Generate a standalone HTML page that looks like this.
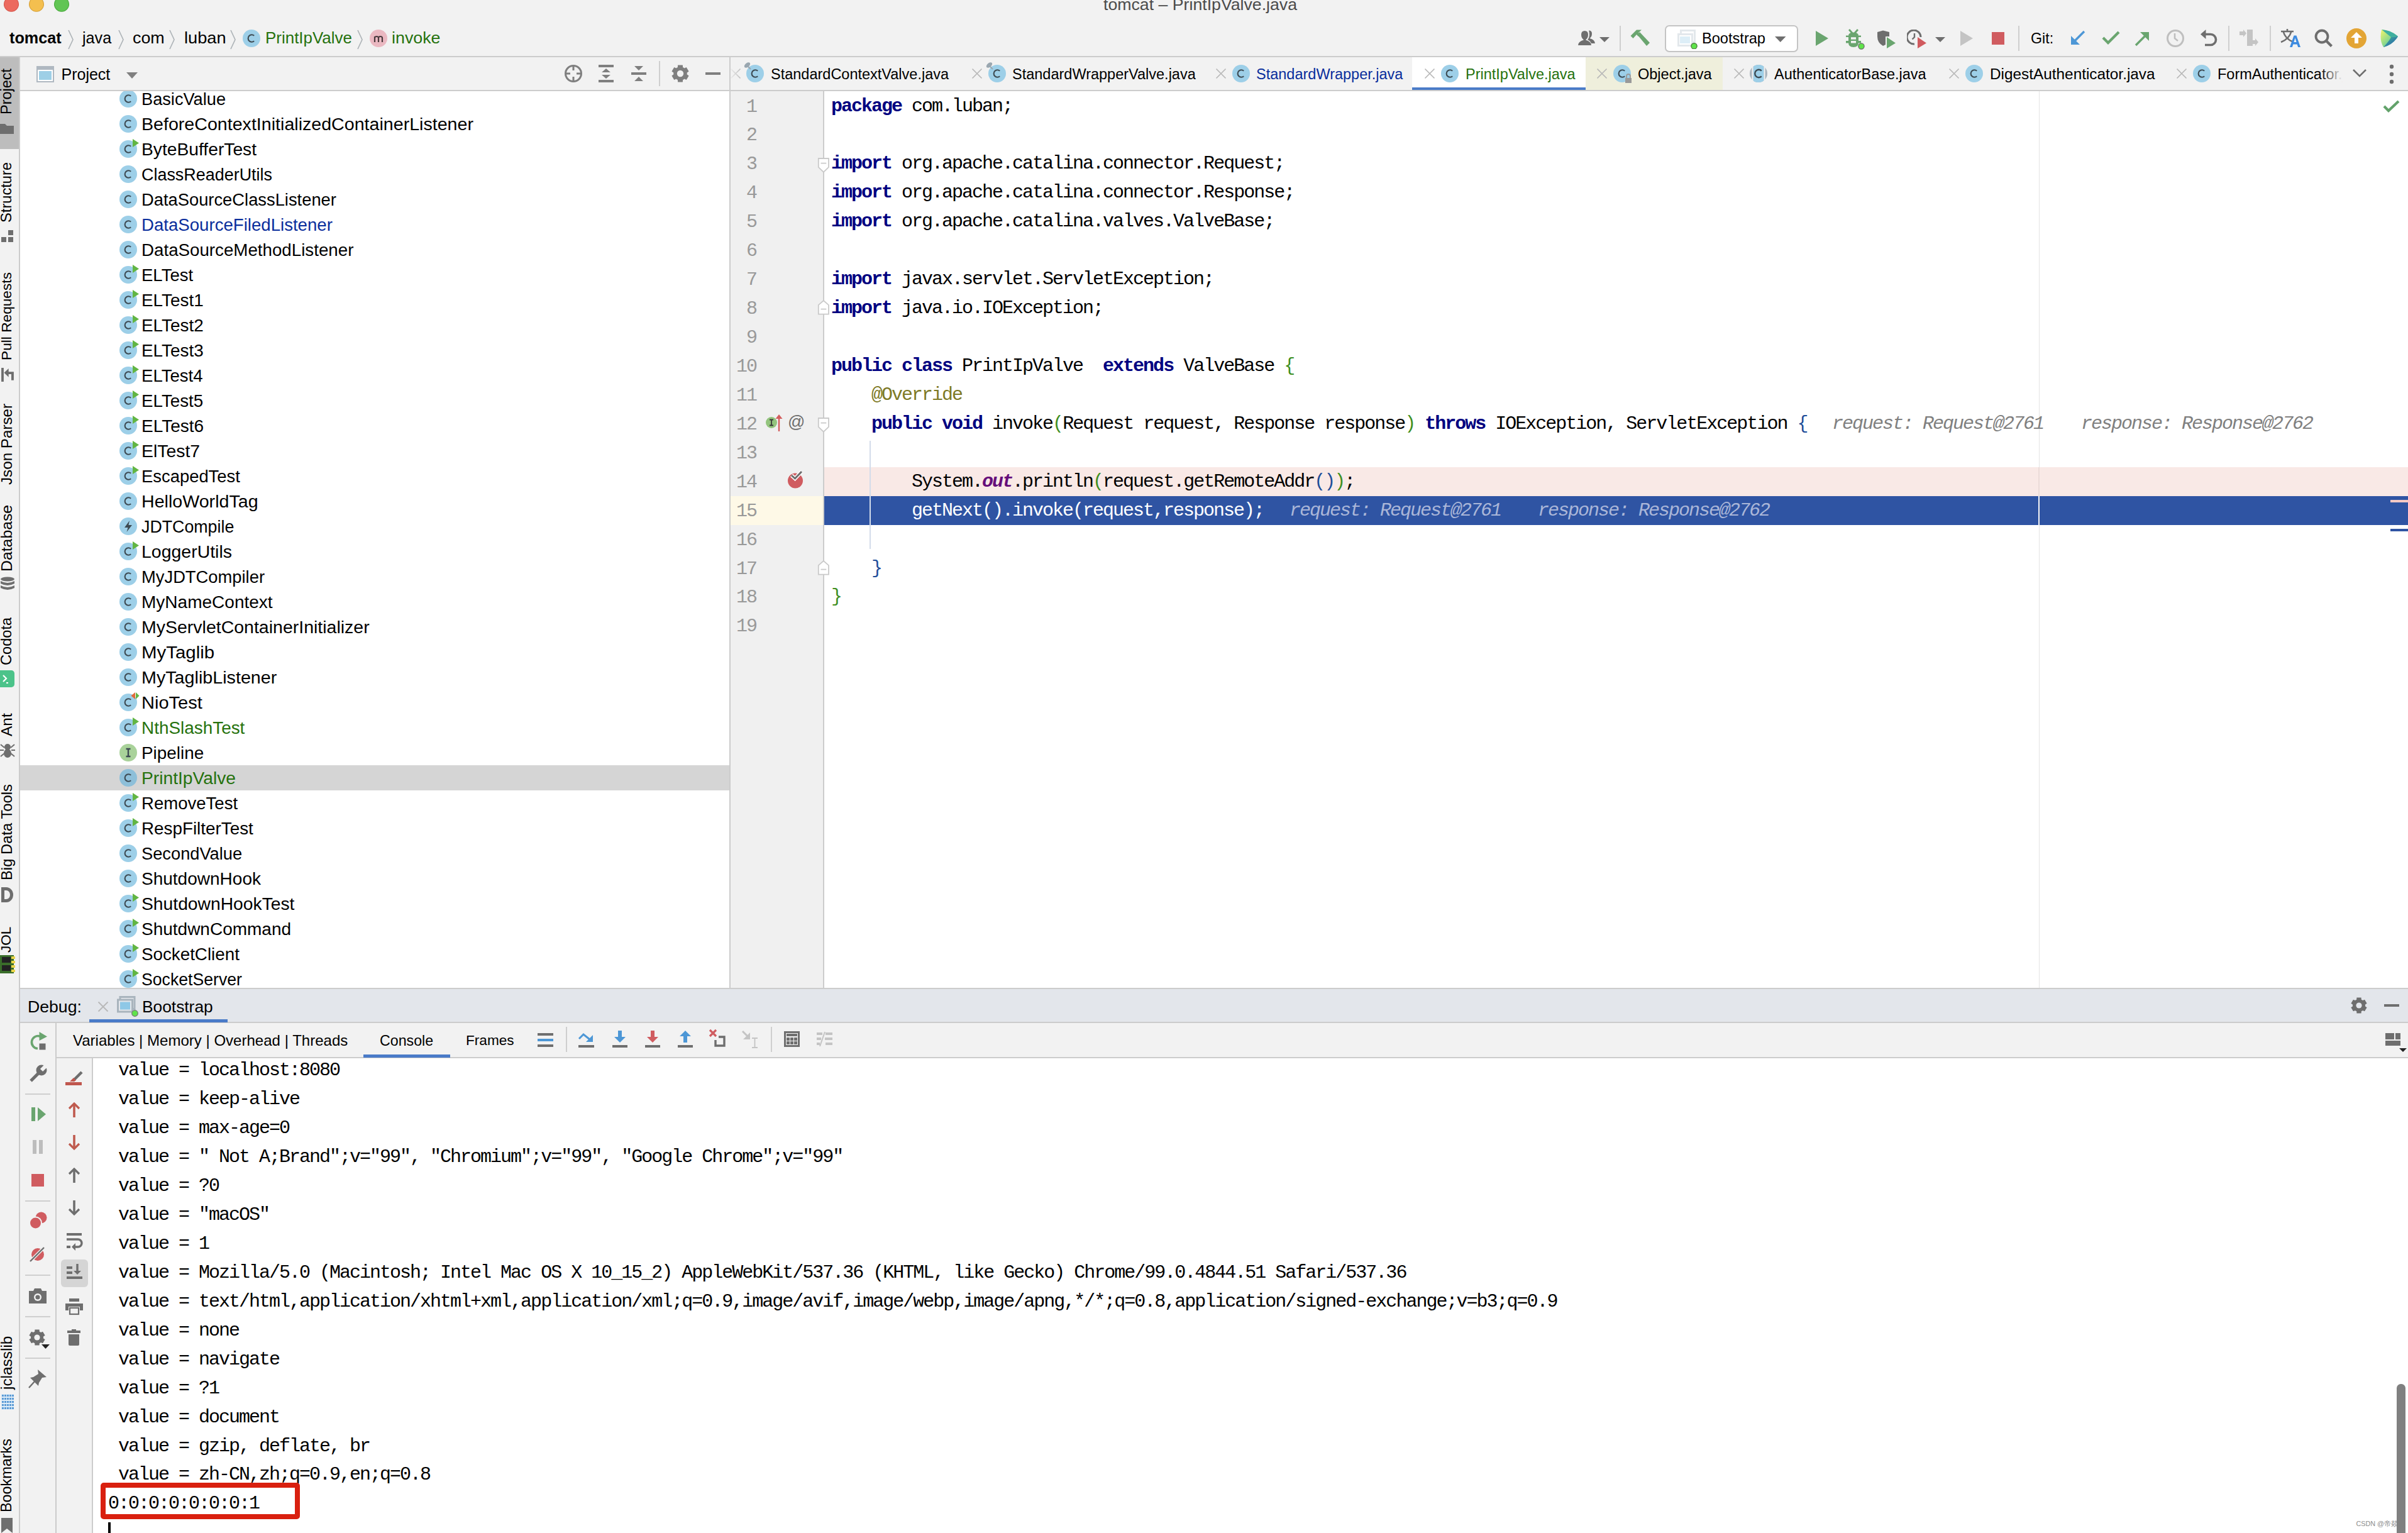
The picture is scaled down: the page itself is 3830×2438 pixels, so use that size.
<!DOCTYPE html><html><head><meta charset="utf-8"><style>
html,body{margin:0;padding:0;}
body{width:3830px;height:2438px;overflow:hidden;position:relative;background:#F2F2F2;}
</style></head><body>
<div style="position:absolute;left:0px;top:0px;width:3830px;height:89px;background:#F2F2F2;"></div>
<svg style="position:absolute;left:0px;top:0px;" width="120" height="24" viewBox="0 0 120 24"><circle cx="18" cy="6.8" r="11.5" fill="#EC6A5F" stroke="#D5574C" stroke-width="1.1"/><circle cx="58" cy="6.8" r="11.5" fill="#F4BF4F" stroke="#D6A13A" stroke-width="1.1"/><circle cx="98" cy="6.8" r="11.5" fill="#61C554" stroke="#48A83C" stroke-width="1.1"/></svg>
<div style="position:absolute;left:1755px;top:-5.60px;font-family:'Liberation Sans',sans-serif;font-size:26.7px;line-height:1;white-space:pre;color:#4B4B4B;">tomcat – PrintIpValve.java</div>
<div style="position:absolute;left:15px;top:47.67px;font-family:'Liberation Sans',sans-serif;font-size:25.2px;line-height:1;white-space:pre;color:#000;font-weight:bold;">tomcat</div>
<svg style="position:absolute;left:106px;top:45.5px;" width="14" height="34" viewBox="0 0 14 34"><path d="M3 2 L10 17 L3 32" fill="none" stroke="#AEB4B8" stroke-width="1.7"/></svg>
<div style="position:absolute;left:131px;top:47.67px;font-family:'Liberation Sans',sans-serif;font-size:25.2px;line-height:1;white-space:pre;color:#000;">java</div>
<svg style="position:absolute;left:186px;top:45.5px;" width="14" height="34" viewBox="0 0 14 34"><path d="M3 2 L10 17 L3 32" fill="none" stroke="#AEB4B8" stroke-width="1.7"/></svg>
<div style="position:absolute;left:210.5px;top:47.67px;font-family:'Liberation Sans',sans-serif;font-size:25.2px;line-height:1;white-space:pre;color:#000;transform-origin:0 0;transform:scaleX(1.065);">com</div>
<svg style="position:absolute;left:267px;top:45.5px;" width="14" height="34" viewBox="0 0 14 34"><path d="M3 2 L10 17 L3 32" fill="none" stroke="#AEB4B8" stroke-width="1.7"/></svg>
<div style="position:absolute;left:292.5px;top:47.67px;font-family:'Liberation Sans',sans-serif;font-size:25.2px;line-height:1;white-space:pre;color:#000;transform-origin:0 0;transform:scaleX(1.08);">luban</div>
<svg style="position:absolute;left:364px;top:45.5px;" width="14" height="34" viewBox="0 0 14 34"><path d="M3 2 L10 17 L3 32" fill="none" stroke="#AEB4B8" stroke-width="1.7"/></svg>
<svg style="position:absolute;left:380px;top:41px;" width="40" height="40" viewBox="0 0 40 40"><circle cx="20" cy="20" r="14" fill="#9DCFE8"/><path d="M24.2 15.8 A5.7 5.7 0 1 0 24.2 24.2" fill="none" stroke="#3D4A52" stroke-width="2.1"/></svg>
<div style="position:absolute;left:421.5px;top:47.67px;font-family:'Liberation Sans',sans-serif;font-size:25.2px;line-height:1;white-space:pre;color:#26720E;transform-origin:0 0;transform:scaleX(1.03);">PrintIpValve</div>
<svg style="position:absolute;left:566px;top:45.5px;" width="14" height="34" viewBox="0 0 14 34"><path d="M3 2 L10 17 L3 32" fill="none" stroke="#AEB4B8" stroke-width="1.7"/></svg>
<svg style="position:absolute;left:582px;top:41px;" width="40" height="40" viewBox="0 0 40 40"><circle cx="20" cy="20" r="14" fill="#EAB8C1"/><path d="M14 26v-9M14 19.5q0-2.5 3-2.5t3 2.5v6.5M20 19.5q0-2.5 3-2.5t3 2.5v6.5" fill="none" stroke="#4A3A3E" stroke-width="2.2"/></svg>
<div style="position:absolute;left:623px;top:47.67px;font-family:'Liberation Sans',sans-serif;font-size:25.2px;line-height:1;white-space:pre;color:#26720E;transform-origin:0 0;transform:scaleX(1.065);">invoke</div>
<div style="position:absolute;left:0px;top:89px;width:3830px;height:2px;background:#CCCCCC;"></div>
<div style="position:absolute;left:0px;top:91px;width:30px;height:2347px;background:#F2F2F2;"></div>
<div style="position:absolute;left:30px;top:91px;width:2px;height:2347px;background:#CCCCCC;"></div>
<div style="position:absolute;left:0px;top:91px;width:30px;height:146px;background:#BDBDBD;"></div>
<div style="position:absolute;left:32px;top:91px;width:1128px;height:52px;background:#F2F2F2;"></div>
<div style="position:absolute;left:32px;top:143px;width:1128px;height:2px;background:#CCCCCC;"></div>
<div style="position:absolute;left:32px;top:145px;width:1128px;height:1426px;background:#FFFFFF;"></div>
<div style="position:absolute;left:1160px;top:91px;width:2px;height:1481px;background:#CCCCCC;"></div>
<div style="position:absolute;left:1162px;top:91px;width:2668px;height:52px;background:#F2F2F2;"></div>
<div style="position:absolute;left:1162px;top:143px;width:2668px;height:2px;background:#CCCCCC;"></div>
<div style="position:absolute;left:1162px;top:145px;width:2668px;height:1426px;background:#FFFFFF;"></div>
<div style="position:absolute;left:1162px;top:145px;width:148px;height:1426px;background:#F0F0F0;"></div>
<div style="position:absolute;left:1309px;top:145px;width:2px;height:1426px;background:#CCCCCC;"></div>
<div style="position:absolute;left:32px;top:1571px;width:3798px;height:2px;background:#CCCCCC;"></div>
<div style="position:absolute;left:32px;top:1573px;width:3798px;height:52px;background:#E3E6EB;"></div>
<div style="position:absolute;left:32px;top:1625px;width:3798px;height:2px;background:#CCCCCC;"></div>
<div style="position:absolute;left:32px;top:1627px;width:3798px;height:54px;background:#F2F2F2;"></div>
<div style="position:absolute;left:90px;top:1681px;width:3740px;height:2px;background:#CCCCCC;"></div>
<div style="position:absolute;left:148px;top:1683px;width:3682px;height:755px;background:#FFFFFF;"></div>
<div style="position:absolute;left:88px;top:1627px;width:2px;height:811px;background:#CCCCCC;"></div>
<div style="position:absolute;left:146px;top:1683px;width:2px;height:755px;background:#CCCCCC;"></div>
<div style="position:absolute;left:32px;top:145px;width:1128px;height:1426px;overflow:hidden;">
<svg style="position:absolute;left:152px;top:-8px;" width="40" height="40" viewBox="0 0 40 40"><circle cx="20" cy="20" r="14" fill="#9DCFE8"/><path d="M24.2 15.8 A5.7 5.7 0 1 0 24.2 24.2" fill="none" stroke="#3D4A52" stroke-width="2.1"/></svg>
<div style="position:absolute;left:193.2px;top:0.31px;font-family:'Liberation Sans',sans-serif;font-size:26.8px;line-height:1;white-space:pre;color:#000;transform-origin:0 0;transform:scaleX(1.0146);">BasicValue</div>
<svg style="position:absolute;left:152px;top:32px;" width="40" height="40" viewBox="0 0 40 40"><circle cx="20" cy="20" r="14" fill="#9DCFE8"/><path d="M24.2 15.8 A5.7 5.7 0 1 0 24.2 24.2" fill="none" stroke="#3D4A52" stroke-width="2.1"/></svg>
<div style="position:absolute;left:193.2px;top:40.31px;font-family:'Liberation Sans',sans-serif;font-size:26.8px;line-height:1;white-space:pre;color:#000;transform-origin:0 0;transform:scaleX(1.0675);">BeforeContextInitializedContainerListener</div>
<svg style="position:absolute;left:152px;top:72px;" width="40" height="40" viewBox="0 0 40 40"><circle cx="20" cy="20" r="14" fill="#9DCFE8"/><path d="M24.2 15.8 A5.7 5.7 0 1 0 24.2 24.2" fill="none" stroke="#3D4A52" stroke-width="2.1"/><path d="M27 4 L37 10.5 L27 17 Z" fill="#62B543"/></svg>
<div style="position:absolute;left:193.2px;top:80.31px;font-family:'Liberation Sans',sans-serif;font-size:26.8px;line-height:1;white-space:pre;color:#000;transform-origin:0 0;transform:scaleX(1.0535);">ByteBufferTest</div>
<svg style="position:absolute;left:152px;top:112px;" width="40" height="40" viewBox="0 0 40 40"><circle cx="20" cy="20" r="14" fill="#9DCFE8"/><path d="M24.2 15.8 A5.7 5.7 0 1 0 24.2 24.2" fill="none" stroke="#3D4A52" stroke-width="2.1"/></svg>
<div style="position:absolute;left:193.2px;top:120.31px;font-family:'Liberation Sans',sans-serif;font-size:26.8px;line-height:1;white-space:pre;color:#000;transform-origin:0 0;transform:scaleX(1.0049);">ClassReaderUtils</div>
<svg style="position:absolute;left:152px;top:152px;" width="40" height="40" viewBox="0 0 40 40"><circle cx="20" cy="20" r="14" fill="#9DCFE8"/><path d="M24.2 15.8 A5.7 5.7 0 1 0 24.2 24.2" fill="none" stroke="#3D4A52" stroke-width="2.1"/></svg>
<div style="position:absolute;left:193.2px;top:160.31px;font-family:'Liberation Sans',sans-serif;font-size:26.8px;line-height:1;white-space:pre;color:#000;transform-origin:0 0;transform:scaleX(1.0199);">DataSourceClassListener</div>
<svg style="position:absolute;left:152px;top:192px;" width="40" height="40" viewBox="0 0 40 40"><circle cx="20" cy="20" r="14" fill="#9DCFE8"/><path d="M24.2 15.8 A5.7 5.7 0 1 0 24.2 24.2" fill="none" stroke="#3D4A52" stroke-width="2.1"/></svg>
<div style="position:absolute;left:193.2px;top:200.31px;font-family:'Liberation Sans',sans-serif;font-size:26.8px;line-height:1;white-space:pre;color:#0A2E9C;transform-origin:0 0;transform:scaleX(1.0304);">DataSourceFiledListener</div>
<svg style="position:absolute;left:152px;top:232px;" width="40" height="40" viewBox="0 0 40 40"><circle cx="20" cy="20" r="14" fill="#9DCFE8"/><path d="M24.2 15.8 A5.7 5.7 0 1 0 24.2 24.2" fill="none" stroke="#3D4A52" stroke-width="2.1"/></svg>
<div style="position:absolute;left:193.2px;top:240.31px;font-family:'Liberation Sans',sans-serif;font-size:26.8px;line-height:1;white-space:pre;color:#000;transform-origin:0 0;transform:scaleX(1.0342);">DataSourceMethodListener</div>
<svg style="position:absolute;left:152px;top:272px;" width="40" height="40" viewBox="0 0 40 40"><circle cx="20" cy="20" r="14" fill="#9DCFE8"/><path d="M24.2 15.8 A5.7 5.7 0 1 0 24.2 24.2" fill="none" stroke="#3D4A52" stroke-width="2.1"/><path d="M27 4 L37 10.5 L27 17 Z" fill="#62B543"/></svg>
<div style="position:absolute;left:193.2px;top:280.31px;font-family:'Liberation Sans',sans-serif;font-size:26.8px;line-height:1;white-space:pre;color:#000;transform-origin:0 0;transform:scaleX(1.0278);">ELTest</div>
<svg style="position:absolute;left:152px;top:312px;" width="40" height="40" viewBox="0 0 40 40"><circle cx="20" cy="20" r="14" fill="#9DCFE8"/><path d="M24.2 15.8 A5.7 5.7 0 1 0 24.2 24.2" fill="none" stroke="#3D4A52" stroke-width="2.1"/><path d="M27 4 L37 10.5 L27 17 Z" fill="#62B543"/></svg>
<div style="position:absolute;left:193.2px;top:320.31px;font-family:'Liberation Sans',sans-serif;font-size:26.8px;line-height:1;white-space:pre;color:#000;transform-origin:0 0;transform:scaleX(1.0402);">ELTest1</div>
<svg style="position:absolute;left:152px;top:352px;" width="40" height="40" viewBox="0 0 40 40"><circle cx="20" cy="20" r="14" fill="#9DCFE8"/><path d="M24.2 15.8 A5.7 5.7 0 1 0 24.2 24.2" fill="none" stroke="#3D4A52" stroke-width="2.1"/><path d="M27 4 L37 10.5 L27 17 Z" fill="#62B543"/></svg>
<div style="position:absolute;left:193.2px;top:360.31px;font-family:'Liberation Sans',sans-serif;font-size:26.8px;line-height:1;white-space:pre;color:#000;transform-origin:0 0;transform:scaleX(1.0402);">ELTest2</div>
<svg style="position:absolute;left:152px;top:392px;" width="40" height="40" viewBox="0 0 40 40"><circle cx="20" cy="20" r="14" fill="#9DCFE8"/><path d="M24.2 15.8 A5.7 5.7 0 1 0 24.2 24.2" fill="none" stroke="#3D4A52" stroke-width="2.1"/><path d="M27 4 L37 10.5 L27 17 Z" fill="#62B543"/></svg>
<div style="position:absolute;left:193.2px;top:400.31px;font-family:'Liberation Sans',sans-serif;font-size:26.8px;line-height:1;white-space:pre;color:#000;transform-origin:0 0;transform:scaleX(1.0402);">ELTest3</div>
<svg style="position:absolute;left:152px;top:432px;" width="40" height="40" viewBox="0 0 40 40"><circle cx="20" cy="20" r="14" fill="#9DCFE8"/><path d="M24.2 15.8 A5.7 5.7 0 1 0 24.2 24.2" fill="none" stroke="#3D4A52" stroke-width="2.1"/><path d="M27 4 L37 10.5 L27 17 Z" fill="#62B543"/></svg>
<div style="position:absolute;left:193.2px;top:440.31px;font-family:'Liberation Sans',sans-serif;font-size:26.8px;line-height:1;white-space:pre;color:#000;transform-origin:0 0;transform:scaleX(1.0290);">ELTest4</div>
<svg style="position:absolute;left:152px;top:472px;" width="40" height="40" viewBox="0 0 40 40"><circle cx="20" cy="20" r="14" fill="#9DCFE8"/><path d="M24.2 15.8 A5.7 5.7 0 1 0 24.2 24.2" fill="none" stroke="#3D4A52" stroke-width="2.1"/><path d="M27 4 L37 10.5 L27 17 Z" fill="#62B543"/></svg>
<div style="position:absolute;left:193.2px;top:480.31px;font-family:'Liberation Sans',sans-serif;font-size:26.8px;line-height:1;white-space:pre;color:#000;transform-origin:0 0;transform:scaleX(1.0359);">ELTest5</div>
<svg style="position:absolute;left:152px;top:512px;" width="40" height="40" viewBox="0 0 40 40"><circle cx="20" cy="20" r="14" fill="#9DCFE8"/><path d="M24.2 15.8 A5.7 5.7 0 1 0 24.2 24.2" fill="none" stroke="#3D4A52" stroke-width="2.1"/><path d="M27 4 L37 10.5 L27 17 Z" fill="#62B543"/></svg>
<div style="position:absolute;left:193.2px;top:520.31px;font-family:'Liberation Sans',sans-serif;font-size:26.8px;line-height:1;white-space:pre;color:#000;transform-origin:0 0;transform:scaleX(1.0457);">ELTest6</div>
<svg style="position:absolute;left:152px;top:552px;" width="40" height="40" viewBox="0 0 40 40"><circle cx="20" cy="20" r="14" fill="#9DCFE8"/><path d="M24.2 15.8 A5.7 5.7 0 1 0 24.2 24.2" fill="none" stroke="#3D4A52" stroke-width="2.1"/><path d="M27 4 L37 10.5 L27 17 Z" fill="#62B543"/></svg>
<div style="position:absolute;left:193.2px;top:560.31px;font-family:'Liberation Sans',sans-serif;font-size:26.8px;line-height:1;white-space:pre;color:#000;transform-origin:0 0;transform:scaleX(1.0600);">ElTest7</div>
<svg style="position:absolute;left:152px;top:592px;" width="40" height="40" viewBox="0 0 40 40"><circle cx="20" cy="20" r="14" fill="#9DCFE8"/><path d="M24.2 15.8 A5.7 5.7 0 1 0 24.2 24.2" fill="none" stroke="#3D4A52" stroke-width="2.1"/><path d="M27 4 L37 10.5 L27 17 Z" fill="#62B543"/></svg>
<div style="position:absolute;left:193.2px;top:600.31px;font-family:'Liberation Sans',sans-serif;font-size:26.8px;line-height:1;white-space:pre;color:#000;transform-origin:0 0;transform:scaleX(1.0224);">EscapedTest</div>
<svg style="position:absolute;left:152px;top:632px;" width="40" height="40" viewBox="0 0 40 40"><circle cx="20" cy="20" r="14" fill="#9DCFE8"/><path d="M24.2 15.8 A5.7 5.7 0 1 0 24.2 24.2" fill="none" stroke="#3D4A52" stroke-width="2.1"/></svg>
<div style="position:absolute;left:193.2px;top:640.31px;font-family:'Liberation Sans',sans-serif;font-size:26.8px;line-height:1;white-space:pre;color:#000;transform-origin:0 0;transform:scaleX(1.0678);">HelloWorldTag</div>
<svg style="position:absolute;left:152px;top:672px;" width="40" height="40" viewBox="0 0 40 40"><circle cx="20" cy="20" r="14" fill="#9DCFE8"/><path d="M22 11 L14 22 H19.5 L17.5 29 L26 18 H20.5 Z" fill="#3D4A52"/></svg>
<div style="position:absolute;left:193.2px;top:680.31px;font-family:'Liberation Sans',sans-serif;font-size:26.8px;line-height:1;white-space:pre;color:#000;transform-origin:0 0;transform:scaleX(0.9993);">JDTCompile</div>
<svg style="position:absolute;left:152px;top:712px;" width="40" height="40" viewBox="0 0 40 40"><circle cx="20" cy="20" r="14" fill="#9DCFE8"/><path d="M24.2 15.8 A5.7 5.7 0 1 0 24.2 24.2" fill="none" stroke="#3D4A52" stroke-width="2.1"/><path d="M27 4 L37 10.5 L27 17 Z" fill="#62B543"/></svg>
<div style="position:absolute;left:193.2px;top:720.31px;font-family:'Liberation Sans',sans-serif;font-size:26.8px;line-height:1;white-space:pre;color:#000;transform-origin:0 0;transform:scaleX(1.0624);">LoggerUtils</div>
<svg style="position:absolute;left:152px;top:752px;" width="40" height="40" viewBox="0 0 40 40"><circle cx="20" cy="20" r="14" fill="#9DCFE8"/><path d="M24.2 15.8 A5.7 5.7 0 1 0 24.2 24.2" fill="none" stroke="#3D4A52" stroke-width="2.1"/></svg>
<div style="position:absolute;left:193.2px;top:760.31px;font-family:'Liberation Sans',sans-serif;font-size:26.8px;line-height:1;white-space:pre;color:#000;transform-origin:0 0;transform:scaleX(1.0205);">MyJDTCompiler</div>
<svg style="position:absolute;left:152px;top:792px;" width="40" height="40" viewBox="0 0 40 40"><circle cx="20" cy="20" r="14" fill="#9DCFE8"/><path d="M24.2 15.8 A5.7 5.7 0 1 0 24.2 24.2" fill="none" stroke="#3D4A52" stroke-width="2.1"/></svg>
<div style="position:absolute;left:193.2px;top:800.31px;font-family:'Liberation Sans',sans-serif;font-size:26.8px;line-height:1;white-space:pre;color:#000;transform-origin:0 0;transform:scaleX(1.0455);">MyNameContext</div>
<svg style="position:absolute;left:152px;top:832px;" width="40" height="40" viewBox="0 0 40 40"><circle cx="20" cy="20" r="14" fill="#9DCFE8"/><path d="M24.2 15.8 A5.7 5.7 0 1 0 24.2 24.2" fill="none" stroke="#3D4A52" stroke-width="2.1"/></svg>
<div style="position:absolute;left:193.2px;top:840.31px;font-family:'Liberation Sans',sans-serif;font-size:26.8px;line-height:1;white-space:pre;color:#000;transform-origin:0 0;transform:scaleX(1.0634);">MyServletContainerInitializer</div>
<svg style="position:absolute;left:152px;top:872px;" width="40" height="40" viewBox="0 0 40 40"><circle cx="20" cy="20" r="14" fill="#9DCFE8"/><path d="M24.2 15.8 A5.7 5.7 0 1 0 24.2 24.2" fill="none" stroke="#3D4A52" stroke-width="2.1"/></svg>
<div style="position:absolute;left:193.2px;top:880.31px;font-family:'Liberation Sans',sans-serif;font-size:26.8px;line-height:1;white-space:pre;color:#000;transform-origin:0 0;transform:scaleX(1.0981);">MyTaglib</div>
<svg style="position:absolute;left:152px;top:912px;" width="40" height="40" viewBox="0 0 40 40"><circle cx="20" cy="20" r="14" fill="#9DCFE8"/><path d="M24.2 15.8 A5.7 5.7 0 1 0 24.2 24.2" fill="none" stroke="#3D4A52" stroke-width="2.1"/></svg>
<div style="position:absolute;left:193.2px;top:920.31px;font-family:'Liberation Sans',sans-serif;font-size:26.8px;line-height:1;white-space:pre;color:#000;transform-origin:0 0;transform:scaleX(1.0709);">MyTaglibListener</div>
<svg style="position:absolute;left:152px;top:952px;" width="40" height="40" viewBox="0 0 40 40"><circle cx="20" cy="20" r="14" fill="#9DCFE8"/><path d="M24.2 15.8 A5.7 5.7 0 1 0 24.2 24.2" fill="none" stroke="#3D4A52" stroke-width="2.1"/><path d="M31 4 L24.5 9.5 L31 15 Z" fill="#E06A3A"/><path d="M32 4 L37.5 9.5 L32 15 Z" fill="#62B543"/></svg>
<div style="position:absolute;left:193.2px;top:960.31px;font-family:'Liberation Sans',sans-serif;font-size:26.8px;line-height:1;white-space:pre;color:#000;transform-origin:0 0;transform:scaleX(1.0830);">NioTest</div>
<svg style="position:absolute;left:152px;top:992px;" width="40" height="40" viewBox="0 0 40 40"><circle cx="20" cy="20" r="14" fill="#9DCFE8"/><path d="M24.2 15.8 A5.7 5.7 0 1 0 24.2 24.2" fill="none" stroke="#3D4A52" stroke-width="2.1"/><path d="M27 4 L37 10.5 L27 17 Z" fill="#62B543"/></svg>
<div style="position:absolute;left:193.2px;top:1000.31px;font-family:'Liberation Sans',sans-serif;font-size:26.8px;line-height:1;white-space:pre;color:#26720E;transform-origin:0 0;transform:scaleX(1.0410);">NthSlashTest</div>
<svg style="position:absolute;left:152px;top:1032px;" width="40" height="40" viewBox="0 0 40 40"><circle cx="20" cy="20" r="14" fill="#A9D29A"/><path d="M16.5 14h7M16.5 26h7M20 14v12" fill="none" stroke="#3D4A52" stroke-width="2.4"/></svg>
<div style="position:absolute;left:193.2px;top:1040.31px;font-family:'Liberation Sans',sans-serif;font-size:26.8px;line-height:1;white-space:pre;color:#000;transform-origin:0 0;transform:scaleX(1.0398);">Pipeline</div>
<div style="position:absolute;left:0px;top:1072px;width:1128px;height:40px;background:#D5D5D5;"></div>
<svg style="position:absolute;left:152px;top:1072px;" width="40" height="40" viewBox="0 0 40 40"><circle cx="20" cy="20" r="14" fill="#8DBFD9"/><path d="M24.2 15.8 A5.7 5.7 0 1 0 24.2 24.2" fill="none" stroke="#3D4A52" stroke-width="2.1"/></svg>
<div style="position:absolute;left:193.2px;top:1080.31px;font-family:'Liberation Sans',sans-serif;font-size:26.8px;line-height:1;white-space:pre;color:#26720E;transform-origin:0 0;transform:scaleX(1.0529);">PrintIpValve</div>
<svg style="position:absolute;left:152px;top:1112px;" width="40" height="40" viewBox="0 0 40 40"><circle cx="20" cy="20" r="14" fill="#9DCFE8"/><path d="M24.2 15.8 A5.7 5.7 0 1 0 24.2 24.2" fill="none" stroke="#3D4A52" stroke-width="2.1"/><path d="M27 4 L37 10.5 L27 17 Z" fill="#62B543"/></svg>
<div style="position:absolute;left:193.2px;top:1120.31px;font-family:'Liberation Sans',sans-serif;font-size:26.8px;line-height:1;white-space:pre;color:#000;transform-origin:0 0;transform:scaleX(1.0277);">RemoveTest</div>
<svg style="position:absolute;left:152px;top:1152px;" width="40" height="40" viewBox="0 0 40 40"><circle cx="20" cy="20" r="14" fill="#9DCFE8"/><path d="M24.2 15.8 A5.7 5.7 0 1 0 24.2 24.2" fill="none" stroke="#3D4A52" stroke-width="2.1"/><path d="M27 4 L37 10.5 L27 17 Z" fill="#62B543"/></svg>
<div style="position:absolute;left:193.2px;top:1160.31px;font-family:'Liberation Sans',sans-serif;font-size:26.8px;line-height:1;white-space:pre;color:#000;transform-origin:0 0;transform:scaleX(1.0382);">RespFilterTest</div>
<svg style="position:absolute;left:152px;top:1192px;" width="40" height="40" viewBox="0 0 40 40"><circle cx="20" cy="20" r="14" fill="#9DCFE8"/><path d="M24.2 15.8 A5.7 5.7 0 1 0 24.2 24.2" fill="none" stroke="#3D4A52" stroke-width="2.1"/></svg>
<div style="position:absolute;left:193.2px;top:1200.31px;font-family:'Liberation Sans',sans-serif;font-size:26.8px;line-height:1;white-space:pre;color:#000;transform-origin:0 0;transform:scaleX(1.0173);">SecondValue</div>
<svg style="position:absolute;left:152px;top:1232px;" width="40" height="40" viewBox="0 0 40 40"><circle cx="20" cy="20" r="14" fill="#9DCFE8"/><path d="M24.2 15.8 A5.7 5.7 0 1 0 24.2 24.2" fill="none" stroke="#3D4A52" stroke-width="2.1"/></svg>
<div style="position:absolute;left:193.2px;top:1240.31px;font-family:'Liberation Sans',sans-serif;font-size:26.8px;line-height:1;white-space:pre;color:#000;transform-origin:0 0;transform:scaleX(1.0453);">ShutdownHook</div>
<svg style="position:absolute;left:152px;top:1272px;" width="40" height="40" viewBox="0 0 40 40"><circle cx="20" cy="20" r="14" fill="#9DCFE8"/><path d="M24.2 15.8 A5.7 5.7 0 1 0 24.2 24.2" fill="none" stroke="#3D4A52" stroke-width="2.1"/><path d="M27 4 L37 10.5 L27 17 Z" fill="#62B543"/></svg>
<div style="position:absolute;left:193.2px;top:1280.31px;font-family:'Liberation Sans',sans-serif;font-size:26.8px;line-height:1;white-space:pre;color:#000;transform-origin:0 0;transform:scaleX(1.0545);">ShutdownHookTest</div>
<svg style="position:absolute;left:152px;top:1312px;" width="40" height="40" viewBox="0 0 40 40"><circle cx="20" cy="20" r="14" fill="#9DCFE8"/><path d="M24.2 15.8 A5.7 5.7 0 1 0 24.2 24.2" fill="none" stroke="#3D4A52" stroke-width="2.1"/><path d="M27 4 L37 10.5 L27 17 Z" fill="#62B543"/></svg>
<div style="position:absolute;left:193.2px;top:1320.31px;font-family:'Liberation Sans',sans-serif;font-size:26.8px;line-height:1;white-space:pre;color:#000;transform-origin:0 0;transform:scaleX(1.0447);">ShutdwnCommand</div>
<svg style="position:absolute;left:152px;top:1352px;" width="40" height="40" viewBox="0 0 40 40"><circle cx="20" cy="20" r="14" fill="#9DCFE8"/><path d="M24.2 15.8 A5.7 5.7 0 1 0 24.2 24.2" fill="none" stroke="#3D4A52" stroke-width="2.1"/><path d="M27 4 L37 10.5 L27 17 Z" fill="#62B543"/></svg>
<div style="position:absolute;left:193.2px;top:1360.31px;font-family:'Liberation Sans',sans-serif;font-size:26.8px;line-height:1;white-space:pre;color:#000;transform-origin:0 0;transform:scaleX(1.0360);">SocketClient</div>
<svg style="position:absolute;left:152px;top:1392px;" width="40" height="40" viewBox="0 0 40 40"><circle cx="20" cy="20" r="14" fill="#9DCFE8"/><path d="M24.2 15.8 A5.7 5.7 0 1 0 24.2 24.2" fill="none" stroke="#3D4A52" stroke-width="2.1"/><path d="M27 4 L37 10.5 L27 17 Z" fill="#62B543"/></svg>
<div style="position:absolute;left:193.2px;top:1400.31px;font-family:'Liberation Sans',sans-serif;font-size:26.8px;line-height:1;white-space:pre;color:#000;transform-origin:0 0;transform:scaleX(0.9944);">SocketServer</div>
</div>
<div style="position:absolute;left:1311px;top:742.72px;width:2519px;height:45.94px;background:#F9E9E6;"></div>
<div style="position:absolute;left:1311px;top:788.66px;width:2519px;height:45.94px;background:#2F54A3;"></div>
<div style="position:absolute;left:1162px;top:788.66px;width:147px;height:45.94px;background:#FEF9E7;"></div>
<div style="position:absolute;left:3242.5px;top:145px;width:1.5px;height:1426px;background:#E4E4E4;"></div>
<div style="position:absolute;left:3242px;top:742.72px;width:2px;height:45.94px;background:#EBDCD9;"></div>
<div style="position:absolute;left:3242px;top:788.66px;width:2px;height:45.94px;background:#F5F5F5;"></div>
<div style="position:absolute;left:1160px;width:43px;text-align:right;top:147.5px;height:45.94px;line-height:45.94px;font-family:'Liberation Mono',monospace;font-size:30px;letter-spacing:-2.0px;white-space:pre;color:#999999;">1</div>
<div style="position:absolute;left:1160px;width:43px;text-align:right;top:193.44px;height:45.94px;line-height:45.94px;font-family:'Liberation Mono',monospace;font-size:30px;letter-spacing:-2.0px;white-space:pre;color:#999999;">2</div>
<div style="position:absolute;left:1160px;width:43px;text-align:right;top:239.38px;height:45.94px;line-height:45.94px;font-family:'Liberation Mono',monospace;font-size:30px;letter-spacing:-2.0px;white-space:pre;color:#999999;">3</div>
<div style="position:absolute;left:1160px;width:43px;text-align:right;top:285.32px;height:45.94px;line-height:45.94px;font-family:'Liberation Mono',monospace;font-size:30px;letter-spacing:-2.0px;white-space:pre;color:#999999;">4</div>
<div style="position:absolute;left:1160px;width:43px;text-align:right;top:331.26px;height:45.94px;line-height:45.94px;font-family:'Liberation Mono',monospace;font-size:30px;letter-spacing:-2.0px;white-space:pre;color:#999999;">5</div>
<div style="position:absolute;left:1160px;width:43px;text-align:right;top:377.2px;height:45.94px;line-height:45.94px;font-family:'Liberation Mono',monospace;font-size:30px;letter-spacing:-2.0px;white-space:pre;color:#999999;">6</div>
<div style="position:absolute;left:1160px;width:43px;text-align:right;top:423.14px;height:45.94px;line-height:45.94px;font-family:'Liberation Mono',monospace;font-size:30px;letter-spacing:-2.0px;white-space:pre;color:#999999;">7</div>
<div style="position:absolute;left:1160px;width:43px;text-align:right;top:469.08px;height:45.94px;line-height:45.94px;font-family:'Liberation Mono',monospace;font-size:30px;letter-spacing:-2.0px;white-space:pre;color:#999999;">8</div>
<div style="position:absolute;left:1160px;width:43px;text-align:right;top:515.02px;height:45.94px;line-height:45.94px;font-family:'Liberation Mono',monospace;font-size:30px;letter-spacing:-2.0px;white-space:pre;color:#999999;">9</div>
<div style="position:absolute;left:1160px;width:43px;text-align:right;top:560.96px;height:45.94px;line-height:45.94px;font-family:'Liberation Mono',monospace;font-size:30px;letter-spacing:-2.0px;white-space:pre;color:#999999;">10</div>
<div style="position:absolute;left:1160px;width:43px;text-align:right;top:606.9px;height:45.94px;line-height:45.94px;font-family:'Liberation Mono',monospace;font-size:30px;letter-spacing:-2.0px;white-space:pre;color:#999999;">11</div>
<div style="position:absolute;left:1160px;width:43px;text-align:right;top:652.8399999999999px;height:45.94px;line-height:45.94px;font-family:'Liberation Mono',monospace;font-size:30px;letter-spacing:-2.0px;white-space:pre;color:#999999;">12</div>
<div style="position:absolute;left:1160px;width:43px;text-align:right;top:698.78px;height:45.94px;line-height:45.94px;font-family:'Liberation Mono',monospace;font-size:30px;letter-spacing:-2.0px;white-space:pre;color:#999999;">13</div>
<div style="position:absolute;left:1160px;width:43px;text-align:right;top:744.72px;height:45.94px;line-height:45.94px;font-family:'Liberation Mono',monospace;font-size:30px;letter-spacing:-2.0px;white-space:pre;color:#999999;">14</div>
<div style="position:absolute;left:1160px;width:43px;text-align:right;top:790.66px;height:45.94px;line-height:45.94px;font-family:'Liberation Mono',monospace;font-size:30px;letter-spacing:-2.0px;white-space:pre;color:#999999;">15</div>
<div style="position:absolute;left:1160px;width:43px;text-align:right;top:836.5999999999999px;height:45.94px;line-height:45.94px;font-family:'Liberation Mono',monospace;font-size:30px;letter-spacing:-2.0px;white-space:pre;color:#999999;">16</div>
<div style="position:absolute;left:1160px;width:43px;text-align:right;top:882.54px;height:45.94px;line-height:45.94px;font-family:'Liberation Mono',monospace;font-size:30px;letter-spacing:-2.0px;white-space:pre;color:#999999;">17</div>
<div style="position:absolute;left:1160px;width:43px;text-align:right;top:928.48px;height:45.94px;line-height:45.94px;font-family:'Liberation Mono',monospace;font-size:30px;letter-spacing:-2.0px;white-space:pre;color:#999999;">18</div>
<div style="position:absolute;left:1160px;width:43px;text-align:right;top:974.42px;height:45.94px;line-height:45.94px;font-family:'Liberation Mono',monospace;font-size:30px;letter-spacing:-2.0px;white-space:pre;color:#999999;">19</div>
<div style="position:absolute;left:1322px;top:145.5px;height:46px;line-height:46px;font-family:'Liberation Mono',monospace;font-size:30px;letter-spacing:-2.0px;white-space:pre;color:#000;"><span style="color:#000080;font-weight:bold;">package</span> com.luban;</div>
<div style="position:absolute;left:1322px;top:237.38px;height:46px;line-height:46px;font-family:'Liberation Mono',monospace;font-size:30px;letter-spacing:-2.0px;white-space:pre;color:#000;"><span style="color:#000080;font-weight:bold;">import</span> org.apache.catalina.connector.Request;</div>
<div style="position:absolute;left:1322px;top:283.32px;height:46px;line-height:46px;font-family:'Liberation Mono',monospace;font-size:30px;letter-spacing:-2.0px;white-space:pre;color:#000;"><span style="color:#000080;font-weight:bold;">import</span> org.apache.catalina.connector.Response;</div>
<div style="position:absolute;left:1322px;top:329.26px;height:46px;line-height:46px;font-family:'Liberation Mono',monospace;font-size:30px;letter-spacing:-2.0px;white-space:pre;color:#000;"><span style="color:#000080;font-weight:bold;">import</span> org.apache.catalina.valves.ValveBase;</div>
<div style="position:absolute;left:1322px;top:421.14px;height:46px;line-height:46px;font-family:'Liberation Mono',monospace;font-size:30px;letter-spacing:-2.0px;white-space:pre;color:#000;"><span style="color:#000080;font-weight:bold;">import</span> javax.servlet.ServletException;</div>
<div style="position:absolute;left:1322px;top:467.08px;height:46px;line-height:46px;font-family:'Liberation Mono',monospace;font-size:30px;letter-spacing:-2.0px;white-space:pre;color:#000;"><span style="color:#000080;font-weight:bold;">import</span> java.io.IOException;</div>
<div style="position:absolute;left:1322px;top:558.96px;height:46px;line-height:46px;font-family:'Liberation Mono',monospace;font-size:30px;letter-spacing:-2.0px;white-space:pre;color:#000;"><span style="color:#000080;font-weight:bold;">public</span> <span style="color:#000080;font-weight:bold;">class</span> PrintIpValve  <span style="color:#000080;font-weight:bold;">extends</span> ValveBase <span style="color:#3F8F22;">{</span></div>
<div style="position:absolute;left:1322px;top:604.9px;height:46px;line-height:46px;font-family:'Liberation Mono',monospace;font-size:30px;letter-spacing:-2.0px;white-space:pre;color:#000;">    <span style="color:#7E7A26;">@Override</span></div>
<div style="position:absolute;left:1322px;top:650.8399999999999px;height:46px;line-height:46px;font-family:'Liberation Mono',monospace;font-size:30px;letter-spacing:-2.0px;white-space:pre;color:#000;">    <span style="color:#000080;font-weight:bold;">public</span> <span style="color:#000080;font-weight:bold;">void</span> invoke<span style="color:#3F8F22;">(</span>Request request, Response response<span style="color:#3F8F22;">)</span> <span style="color:#000080;font-weight:bold;">throws</span> IOException, ServletException <span style="color:#1F4E99;">{</span></div>
<div style="position:absolute;left:1322px;top:742.72px;height:46px;line-height:46px;font-family:'Liberation Mono',monospace;font-size:30px;letter-spacing:-2.0px;white-space:pre;color:#000;">        System.<span style="color:#660E7A;font-weight:bold;font-style:italic;">out</span>.println<span style="color:#3F8F22;">(</span>request.getRemoteAddr<span style="color:#1F4E99;">()</span><span style="color:#3F8F22;">)</span>;</div>
<div style="position:absolute;left:1322px;top:788.66px;height:46px;line-height:46px;font-family:'Liberation Mono',monospace;font-size:30px;letter-spacing:-2.0px;white-space:pre;color:#FFFFFF;">        getNext().invoke(request,response);</div>
<div style="position:absolute;left:1322px;top:880.54px;height:46px;line-height:46px;font-family:'Liberation Mono',monospace;font-size:30px;letter-spacing:-2.0px;white-space:pre;color:#000;">    <span style="color:#1F4E99;">}</span></div>
<div style="position:absolute;left:1322px;top:926.48px;height:46px;line-height:46px;font-family:'Liberation Mono',monospace;font-size:30px;letter-spacing:-2.0px;white-space:pre;color:#000;"><span style="color:#3F8F22;">}</span></div>
<div style="position:absolute;left:2914px;top:650.8399999999999px;height:46px;line-height:46px;font-family:'Liberation Mono',monospace;font-size:30px;letter-spacing:-2.0px;white-space:pre;color:#000;"><span style="color:#808080;font-style:italic;">request: Request@2761</span></div>
<div style="position:absolute;left:3310px;top:650.8399999999999px;height:46px;line-height:46px;font-family:'Liberation Mono',monospace;font-size:30px;letter-spacing:-2.0px;white-space:pre;color:#000;"><span style="color:#808080;font-style:italic;">response: Response@2762</span></div>
<div style="position:absolute;left:2051px;top:788.66px;height:46px;line-height:46px;font-family:'Liberation Mono',monospace;font-size:30px;letter-spacing:-2.0px;white-space:pre;color:#000;"><span style="color:#AAB6D8;font-style:italic;">request: Request@2761</span></div>
<div style="position:absolute;left:2446px;top:788.66px;height:46px;line-height:46px;font-family:'Liberation Mono',monospace;font-size:30px;letter-spacing:-2.0px;white-space:pre;color:#000;"><span style="color:#AAB6D8;font-style:italic;">response: Response@2762</span></div>
<div style="position:absolute;left:1382.5px;top:700.78px;width:2px;height:171.76px;background:#D3DCEA;"></div>
<div style="position:absolute;left:148px;top:1683px;width:3682px;height:755px;overflow:hidden;">
<div style="position:absolute;left:24px;top:-3.7px;height:46px;line-height:46px;font-family:'Liberation Mono',monospace;font-size:30px;letter-spacing:-2.0px;white-space:pre;color:#000;"> value = localhost:8080</div>
<div style="position:absolute;left:24px;top:42.24px;height:46px;line-height:46px;font-family:'Liberation Mono',monospace;font-size:30px;letter-spacing:-2.0px;white-space:pre;color:#000;"> value = keep-alive</div>
<div style="position:absolute;left:24px;top:88.18px;height:46px;line-height:46px;font-family:'Liberation Mono',monospace;font-size:30px;letter-spacing:-2.0px;white-space:pre;color:#000;"> value = max-age=0</div>
<div style="position:absolute;left:24px;top:134.12px;height:46px;line-height:46px;font-family:'Liberation Mono',monospace;font-size:30px;letter-spacing:-2.0px;white-space:pre;color:#000;"> value = &quot; Not A;Brand&quot;;v=&quot;99&quot;, &quot;Chromium&quot;;v=&quot;99&quot;, &quot;Google Chrome&quot;;v=&quot;99&quot;</div>
<div style="position:absolute;left:24px;top:180.06px;height:46px;line-height:46px;font-family:'Liberation Mono',monospace;font-size:30px;letter-spacing:-2.0px;white-space:pre;color:#000;"> value = ?0</div>
<div style="position:absolute;left:24px;top:226.0px;height:46px;line-height:46px;font-family:'Liberation Mono',monospace;font-size:30px;letter-spacing:-2.0px;white-space:pre;color:#000;"> value = &quot;macOS&quot;</div>
<div style="position:absolute;left:24px;top:271.94px;height:46px;line-height:46px;font-family:'Liberation Mono',monospace;font-size:30px;letter-spacing:-2.0px;white-space:pre;color:#000;"> value = 1</div>
<div style="position:absolute;left:24px;top:317.88px;height:46px;line-height:46px;font-family:'Liberation Mono',monospace;font-size:30px;letter-spacing:-2.0px;white-space:pre;color:#000;"> value = Mozilla/5.0 (Macintosh; Intel Mac OS X 10_15_2) AppleWebKit/537.36 (KHTML, like Gecko) Chrome/99.0.4844.51 Safari/537.36</div>
<div style="position:absolute;left:24px;top:363.82px;height:46px;line-height:46px;font-family:'Liberation Mono',monospace;font-size:30px;letter-spacing:-2.0px;white-space:pre;color:#000;"> value = text/html,application/xhtml+xml,application/xml;q=0.9,image/avif,image/webp,image/apng,*/*;q=0.8,application/signed-exchange;v=b3;q=0.9</div>
<div style="position:absolute;left:24px;top:409.76px;height:46px;line-height:46px;font-family:'Liberation Mono',monospace;font-size:30px;letter-spacing:-2.0px;white-space:pre;color:#000;"> value = none</div>
<div style="position:absolute;left:24px;top:455.7px;height:46px;line-height:46px;font-family:'Liberation Mono',monospace;font-size:30px;letter-spacing:-2.0px;white-space:pre;color:#000;"> value = navigate</div>
<div style="position:absolute;left:24px;top:501.64px;height:46px;line-height:46px;font-family:'Liberation Mono',monospace;font-size:30px;letter-spacing:-2.0px;white-space:pre;color:#000;"> value = ?1</div>
<div style="position:absolute;left:24px;top:547.58px;height:46px;line-height:46px;font-family:'Liberation Mono',monospace;font-size:30px;letter-spacing:-2.0px;white-space:pre;color:#000;"> value = document</div>
<div style="position:absolute;left:24px;top:593.52px;height:46px;line-height:46px;font-family:'Liberation Mono',monospace;font-size:30px;letter-spacing:-2.0px;white-space:pre;color:#000;"> value = gzip, deflate, br</div>
<div style="position:absolute;left:24px;top:639.46px;height:46px;line-height:46px;font-family:'Liberation Mono',monospace;font-size:30px;letter-spacing:-2.0px;white-space:pre;color:#000;"> value = zh-CN,zh;q=0.9,en;q=0.8</div>
<div style="position:absolute;left:24px;top:685.4px;height:46px;line-height:46px;font-family:'Liberation Mono',monospace;font-size:30px;letter-spacing:-2.0px;white-space:pre;color:#000;">0:0:0:0:0:0:0:1</div>
<div style="position:absolute;left:12.300000000000011px;top:674.6999999999998px;width:316.7px;height:58px;box-sizing:border-box;border:8px solid #D9200F;border-radius:5px;"></div>
<div style="position:absolute;left:24px;top:738px;width:4px;height:40px;background:#000;"></div>
</div>
<div style="position:absolute;left:1162px;top:91px;width:2668px;height:52px;overflow:hidden;">
<div style="position:absolute;left:1084px;top:0px;width:276px;height:53px;background:#FFFFFF;"></div>
<div style="position:absolute;left:1084px;top:47.5px;width:276px;height:5px;background:#4A7BC8;"></div>
<div style="position:absolute;left:1360px;top:0px;width:218px;height:53px;background:#EFEFDC;"></div>
<svg style="position:absolute;left:-2px;top:16px;" width="20" height="20" viewBox="0 0 20 20"><path d="M2.5 2.5 L17.5 17.5 M17.5 2.5 L2.5 17.5" stroke="#B8B8B8" stroke-width="1.7"/></svg>
<svg style="position:absolute;left:19px;top:6px;" width="40" height="40" viewBox="0 0 40 40"><circle cx="20" cy="20" r="14" fill="#9DCFE8"/><path d="M24.2 15.8 A5.7 5.7 0 1 0 24.2 24.2" fill="none" stroke="#3D4A52" stroke-width="2.1"/><ellipse cx="7.5" cy="6.5" rx="5.5" ry="3.2" transform="rotate(-40 7.5 6.5)" fill="#9AA7B0"/><path d="M8 8 L13 13" stroke="#9AA7B0" stroke-width="2"/></svg>
<div style="position:absolute;left:64px;top:16.11px;font-family:'Liberation Sans',sans-serif;font-size:23.5px;line-height:1;white-space:pre;color:#000;">StandardContextValve.java</div>
<svg style="position:absolute;left:382px;top:16px;" width="20" height="20" viewBox="0 0 20 20"><path d="M2.5 2.5 L17.5 17.5 M17.5 2.5 L2.5 17.5" stroke="#B8B8B8" stroke-width="1.7"/></svg>
<svg style="position:absolute;left:404px;top:6px;" width="40" height="40" viewBox="0 0 40 40"><circle cx="20" cy="20" r="14" fill="#9DCFE8"/><path d="M24.2 15.8 A5.7 5.7 0 1 0 24.2 24.2" fill="none" stroke="#3D4A52" stroke-width="2.1"/><ellipse cx="7.5" cy="6.5" rx="5.5" ry="3.2" transform="rotate(-40 7.5 6.5)" fill="#9AA7B0"/><path d="M8 8 L13 13" stroke="#9AA7B0" stroke-width="2"/></svg>
<div style="position:absolute;left:448px;top:16.11px;font-family:'Liberation Sans',sans-serif;font-size:23.5px;line-height:1;white-space:pre;color:#000;">StandardWrapperValve.java</div>
<svg style="position:absolute;left:769.5px;top:16px;" width="20" height="20" viewBox="0 0 20 20"><path d="M2.5 2.5 L17.5 17.5 M17.5 2.5 L2.5 17.5" stroke="#B8B8B8" stroke-width="1.7"/></svg>
<svg style="position:absolute;left:792px;top:6px;" width="40" height="40" viewBox="0 0 40 40"><circle cx="20" cy="20" r="14" fill="#9DCFE8"/><path d="M24.2 15.8 A5.7 5.7 0 1 0 24.2 24.2" fill="none" stroke="#3D4A52" stroke-width="2.1"/></svg>
<div style="position:absolute;left:836px;top:16.11px;font-family:'Liberation Sans',sans-serif;font-size:23.5px;line-height:1;white-space:pre;color:#0A2E9C;">StandardWrapper.java</div>
<svg style="position:absolute;left:1102px;top:16px;" width="20" height="20" viewBox="0 0 20 20"><path d="M2.5 2.5 L17.5 17.5 M17.5 2.5 L2.5 17.5" stroke="#B8B8B8" stroke-width="1.7"/></svg>
<svg style="position:absolute;left:1124px;top:6px;" width="40" height="40" viewBox="0 0 40 40"><circle cx="20" cy="20" r="14" fill="#9DCFE8"/><path d="M24.2 15.8 A5.7 5.7 0 1 0 24.2 24.2" fill="none" stroke="#3D4A52" stroke-width="2.1"/></svg>
<div style="position:absolute;left:1169px;top:16.11px;font-family:'Liberation Sans',sans-serif;font-size:23.5px;line-height:1;white-space:pre;color:#26720E;">PrintIpValve.java</div>
<svg style="position:absolute;left:1376px;top:16px;" width="20" height="20" viewBox="0 0 20 20"><path d="M2.5 2.5 L17.5 17.5 M17.5 2.5 L2.5 17.5" stroke="#B8B8B8" stroke-width="1.7"/></svg>
<svg style="position:absolute;left:1398px;top:6px;" width="40" height="40" viewBox="0 0 40 40"><circle cx="20" cy="20" r="14" fill="#9DCFE8"/><path d="M24.2 15.8 A5.7 5.7 0 1 0 24.2 24.2" fill="none" stroke="#3D4A52" stroke-width="2.1"/><rect x="25" y="27" width="10" height="8" fill="#999"/><path d="M27 27v-3a3 3 0 0 1 6 0v3" fill="none" stroke="#999" stroke-width="1.8"/></svg>
<div style="position:absolute;left:1443px;top:16.11px;font-family:'Liberation Sans',sans-serif;font-size:23.5px;line-height:1;white-space:pre;color:#000;">Object.java</div>
<svg style="position:absolute;left:1594px;top:16px;" width="20" height="20" viewBox="0 0 20 20"><path d="M2.5 2.5 L17.5 17.5 M17.5 2.5 L2.5 17.5" stroke="#B8B8B8" stroke-width="1.7"/></svg>
<svg style="position:absolute;left:1615px;top:6px;" width="40" height="40" viewBox="0 0 40 40"><defs><clipPath id="pc"><circle cx="20" cy="20" r="14"/></clipPath></defs><circle cx="20" cy="20" r="14" fill="#AAB4BD"/><rect x="11.5" y="5" width="17" height="30" fill="#9DCFE8" clip-path="url(#pc)"/><rect x="9.5" y="5" width="2" height="30" fill="#F2F2F2"/><rect x="28.5" y="5" width="2" height="30" fill="#F2F2F2"/><path d="M24.8 15.6 A6.2 6.2 0 1 0 24.8 24.4" fill="none" stroke="#3D4A52" stroke-width="2.4"/></svg>
<div style="position:absolute;left:1660px;top:16.11px;font-family:'Liberation Sans',sans-serif;font-size:23.5px;line-height:1;white-space:pre;color:#000;">AuthenticatorBase.java</div>
<svg style="position:absolute;left:1936px;top:16px;" width="20" height="20" viewBox="0 0 20 20"><path d="M2.5 2.5 L17.5 17.5 M17.5 2.5 L2.5 17.5" stroke="#B8B8B8" stroke-width="1.7"/></svg>
<svg style="position:absolute;left:1958px;top:6px;" width="40" height="40" viewBox="0 0 40 40"><circle cx="20" cy="20" r="14" fill="#9DCFE8"/><path d="M24.2 15.8 A5.7 5.7 0 1 0 24.2 24.2" fill="none" stroke="#3D4A52" stroke-width="2.1"/></svg>
<div style="position:absolute;left:2003px;top:16.11px;font-family:'Liberation Sans',sans-serif;font-size:23.5px;line-height:1;white-space:pre;color:#000;transform-origin:0 0;transform:scaleX(1.036);">DigestAuthenticator.java</div>
<svg style="position:absolute;left:2298px;top:16px;" width="20" height="20" viewBox="0 0 20 20"><path d="M2.5 2.5 L17.5 17.5 M17.5 2.5 L2.5 17.5" stroke="#B8B8B8" stroke-width="1.7"/></svg>
<svg style="position:absolute;left:2320px;top:6px;" width="40" height="40" viewBox="0 0 40 40"><circle cx="20" cy="20" r="14" fill="#9DCFE8"/><path d="M24.2 15.8 A5.7 5.7 0 1 0 24.2 24.2" fill="none" stroke="#3D4A52" stroke-width="2.1"/></svg>
<div style="position:absolute;left:2365px;top:16.11px;font-family:'Liberation Sans',sans-serif;font-size:23.5px;line-height:1;white-space:pre;color:#000;">FormAuthenticator.java</div>
<div style="position:absolute;left:0px;top:0px;width:18px;height:52px;background:linear-gradient(to right, rgba(242,242,242,0.9), rgba(242,242,242,0));"></div>
<div style="position:absolute;left:2528px;top:0px;width:40px;height:53px;background:linear-gradient(to right, rgba(242,242,242,0), #F2F2F2 90%);"></div>
<div style="position:absolute;left:2566px;top:0px;width:102px;height:53px;background:#F2F2F2;"></div>
<svg style="position:absolute;left:2578px;top:14px;" width="26" height="24" viewBox="0 0 26 24"><path d="M3 6 L13 16 L23 6" fill="none" stroke="#6E6E6E" stroke-width="2.6"/></svg>
<svg style="position:absolute;left:2634px;top:9px;" width="16" height="36" viewBox="0 0 16 36"><circle cx="8" cy="6" r="3.2" fill="#6E6E6E"/><circle cx="8" cy="18" r="3.2" fill="#6E6E6E"/><circle cx="8" cy="30" r="3.2" fill="#6E6E6E"/></svg>
</div>
<svg style="position:absolute;left:58px;top:105px;" width="28" height="26" viewBox="0 0 28 26"><rect x="0" y="0" width="28" height="26" fill="#AFB8C1"/><rect x="2" y="6" width="24" height="18" fill="#FFFFFF"/><rect x="4" y="8" width="20" height="14" fill="#9ECFE6"/></svg>
<div style="position:absolute;left:97.5px;top:105.84px;font-family:'Liberation Sans',sans-serif;font-size:25px;line-height:1;white-space:pre;color:#000;">Project</div>
<svg style="position:absolute;left:200px;top:114px;" width="20" height="12" viewBox="0 0 20 12"><path d="M1 1 L19 1 L10 11 Z" fill="#808080"/></svg>
<svg style="position:absolute;left:896px;top:101px;" width="32" height="32" viewBox="0 0 32 32"><circle cx="16" cy="16" r="12.5" fill="none" stroke="#7F7F7F" stroke-width="3"/><path d="M16 3v8M16 21v8M3 16h8M21 16h8" stroke="#7F7F7F" stroke-width="3"/></svg>
<svg style="position:absolute;left:952px;top:101px;" width="24" height="32" viewBox="0 0 24 32"><rect x="0" y="2" width="24" height="4" fill="#7F7F7F"/><rect x="0" y="26" width="24" height="4" fill="#7F7F7F"/><path d="M5 14 L12 8 L19 14 Z M5 18 L12 24 L19 18 Z" fill="#7F7F7F"/></svg>
<svg style="position:absolute;left:1004px;top:101px;" width="24" height="32" viewBox="0 0 24 32"><rect x="0" y="14" width="24" height="4" fill="#7F7F7F"/><path d="M5 4 L19 4 L12 11 Z M5 28 L19 28 L12 21 Z" fill="#7F7F7F"/></svg>
<div style="position:absolute;left:1048px;top:97px;width:2px;height:40px;background:#CFCFCF;"></div>
<svg style="position:absolute;left:1066px;top:101px;" width="32" height="32" viewBox="0 0 32 32"><polygon points="12.13,2.55 19.87,2.55 20.14,6.20 21.43,6.60 22.42,7.51 25.72,5.92 29.59,12.62 26.56,14.69 26.85,16.00 26.56,17.31 29.59,19.38 25.72,26.08 22.42,24.49 21.43,25.40 20.14,25.80 19.87,29.45 12.13,29.45 11.86,25.80 10.57,25.40 9.58,24.49 6.28,26.08 2.41,19.38 5.44,17.31 5.15,16.00 5.44,14.69 2.41,12.62 6.28,5.92 9.58,7.51 10.57,6.60 11.86,6.20" fill="#7F7F7F"/><circle cx="16" cy="16" r="5.2" fill="#F2F2F2"/></svg>
<div style="position:absolute;left:1122px;top:115px;width:24px;height:4px;background:#7F7F7F;"></div>
<svg style="position:absolute;left:2508px;top:47px;" width="32" height="28" viewBox="0 0 32 28"><path d="M2 25 q0-6 9-8.5 q-4-3-4-8.5 q0-6 5.5-6 q5.5 0 5.5 6 q0 5.5-4 8.5 q9 2.5 9 8.5 Z" fill="#6E6E6E"/><path d="M19 1.5 q5 0 5 5 q0 5-3.5 7.5 q8 2 8.5 8 l-6 0 q-1.5-4-6-6 q3-3 3-8 q0-4-1-6.5 Z" fill="#6E6E6E"/></svg>
<svg style="position:absolute;left:2543px;top:58px;" width="18" height="10" viewBox="0 0 18 10"><path d="M1 1 L17 1 L9 9 Z" fill="#6E6E6E"/></svg>
<div style="position:absolute;left:2576px;top:41px;width:2px;height:40px;background:#CFCFCF;"></div>
<svg style="position:absolute;left:2593px;top:46px;" width="32" height="30" viewBox="0 0 32 30"><path d="M0.5 11 L10 1.5 L18 1.5 L13 6 L16 9 L13 12 L10 9 L4.5 15 Z" fill="#6AA56F"/><path d="M11 9 L15 5 L31 22 L26 27 Z" fill="#6AA56F"/></svg>
<div style="position:absolute;left:2648px;top:39.5px;width:212px;height:43px;box-sizing:border-box;background:#FFFFFF;border:2px solid #C4C4C4;border-radius:7px;"></div>
<svg style="position:absolute;left:2668px;top:46px;" width="34" height="32" viewBox="0 0 34 32"><rect x="5.5" y="2.5" width="22" height="18" fill="none" stroke="#E3E8EC" stroke-width="3"/><rect x="1.5" y="8.5" width="22" height="18" fill="#FFFFFF" stroke="#E3E8EC" stroke-width="3"/><rect x="4" y="12" width="16" height="11" fill="#DDEEF7"/><circle cx="26.5" cy="27.3" r="4.6" fill="#5FE34A" stroke="#4A7F3E" stroke-width="1.4"/></svg>
<div style="position:absolute;left:2707px;top:50.02px;font-family:'Liberation Sans',sans-serif;font-size:23.6px;line-height:1;white-space:pre;color:#000;">Bootstrap</div>
<svg style="position:absolute;left:2822px;top:57px;" width="20" height="11" viewBox="0 0 20 11"><path d="M1 1 L18.5 1 L9.75 10 Z" fill="#6E6E6E"/></svg>
<svg style="position:absolute;left:2887px;top:48px;" width="22" height="26" viewBox="0 0 22 26"><path d="M1 1 L21 13 L1 25 Z" fill="#6AA56F"/></svg>
<svg style="position:absolute;left:2934px;top:46px;" width="34" height="34" viewBox="0 0 34 34"><path d="M7 1 L12 6.5 M21 1 L16 6.5" stroke="#6AA56F" stroke-width="2.8"/><path d="M6 11 q0-5.5 8-5.5 q8 0 8 5.5 v11 q0 7-8 7 q-8 0-8-7 Z" fill="#6AA56F"/><rect x="2" y="10.5" width="4" height="2.5" fill="#6AA56F"/><rect x="22" y="10.5" width="4" height="2.5" fill="#6AA56F"/><rect x="2" y="19" width="4" height="3.5" fill="#6AA56F"/><rect x="22" y="19" width="4" height="3.5" fill="#6AA56F"/><rect x="10" y="13.2" width="8" height="3.5" fill="#F2F2F2"/><rect x="10" y="19" width="8" height="3.5" fill="#F2F2F2"/><circle cx="26.5" cy="27.5" r="4.6" fill="#5FE34A" stroke="#666" stroke-width="1.2"/></svg>
<svg style="position:absolute;left:2985px;top:48px;" width="32" height="30" viewBox="0 0 32 30"><path d="M1 3 L10 0.5 L20 3 L20 10 L14 10 L14 23 L10 25 Q1 20 1 10 Z" fill="#6E6E6E"/><path d="M16 11 L30 20.5 L16 29 Z" fill="#6AA56F"/></svg>
<svg style="position:absolute;left:3033px;top:47px;" width="32" height="31" viewBox="0 0 32 31"><path d="M22 12 A11 11 0 1 0 12 23" fill="none" stroke="#6E6E6E" stroke-width="3"/><path d="M12 6 v6 l-3.5 3.5" fill="none" stroke="#6E6E6E" stroke-width="2.4"/><path d="M17 12 L31 21.5 L17 30 Z" fill="#D05A5E"/></svg>
<svg style="position:absolute;left:3077px;top:58px;" width="18" height="10" viewBox="0 0 18 10"><path d="M1 1 L17 1 L9 9 Z" fill="#6E6E6E"/></svg>
<svg style="position:absolute;left:3117px;top:48px;" width="22" height="26" viewBox="0 0 22 26"><path d="M1 1 L21 13 L1 25 Z" fill="#C4C4C4"/></svg>
<div style="position:absolute;left:3168px;top:51px;width:20px;height:20px;background:#D05C60;"></div>
<div style="position:absolute;left:3210px;top:41px;width:2px;height:40px;background:#CFCFCF;"></div>
<div style="position:absolute;left:3230px;top:49.86px;font-family:'Liberation Sans',sans-serif;font-size:23.2px;line-height:1;white-space:pre;color:#000;">Git:</div>
<svg style="position:absolute;left:3293px;top:48px;" width="24" height="24" viewBox="0 0 24 24"><path d="M22 2 L6 18" stroke="#4D97D6" stroke-width="3.4"/><path d="M1 9 L1 23 L15 23 Z" fill="#4D97D6"/></svg>
<svg style="position:absolute;left:3343px;top:48px;" width="30" height="25" viewBox="0 0 30 25"><path d="M2 12 L10 20 L27 3" fill="none" stroke="#6AA56F" stroke-width="4.2"/></svg>
<svg style="position:absolute;left:3395px;top:49px;" width="24" height="25" viewBox="0 0 24 25"><path d="M2 23 L17 8" stroke="#6AA56F" stroke-width="3.4"/><path d="M9 2 L23 2 L23 16 Z" fill="#6AA56F"/></svg>
<svg style="position:absolute;left:3445px;top:46px;" width="30" height="30" viewBox="0 0 30 30"><circle cx="15" cy="15" r="12.5" fill="none" stroke="#BFBFBF" stroke-width="3"/><path d="M14 7 v8 l5 4" fill="none" stroke="#BFBFBF" stroke-width="2.6"/></svg>
<svg style="position:absolute;left:3499px;top:46px;" width="30" height="30" viewBox="0 0 30 30"><path d="M8 8.5 H17 A8.5 8.5 0 0 1 17 25.5 H8" fill="none" stroke="#6E6E6E" stroke-width="3.6"/><path d="M1 8.5 L9.5 1 L9.5 16 Z" fill="#6E6E6E"/></svg>
<div style="position:absolute;left:3544px;top:41px;width:2px;height:40px;background:#CFCFCF;"></div>
<svg style="position:absolute;left:3562px;top:46px;" width="32" height="30" viewBox="0 0 32 30"><rect x="12" y="1" width="9" height="26" fill="#C4C4C4"/><path d="M0 4h6v-3l5 6-5 6v-3H0Z" fill="#C4C4C4"/><path d="M21 18h4v-3l5 6-5 6v-3h-4Z" fill="#C4C4C4"/></svg>
<div style="position:absolute;left:3610px;top:41px;width:2px;height:40px;background:#CFCFCF;"></div>
<svg style="position:absolute;left:3627px;top:46px;" width="34" height="30" viewBox="0 0 34 30"><path d="M1 4 H21 M11 0 V4 M4.5 4 Q8 16 20 20.5 M17.5 4 Q14 16 1 21" fill="none" stroke="#6E6E6E" stroke-width="2.6"/><path d="M15 29 L21.5 10.5 L25.5 10.5 L32 29 L28.2 29 L26.6 24.5 L20.4 24.5 L18.8 29 Z M21.4 21 H25.6 L23.5 14.5 Z" fill="#3D8BE0"/></svg>
<svg style="position:absolute;left:3681px;top:46px;" width="30" height="30" viewBox="0 0 30 30"><circle cx="12" cy="12" r="9.5" fill="none" stroke="#6E6E6E" stroke-width="3.8"/><path d="M19 19 L27.5 27.5" stroke="#6E6E6E" stroke-width="4.2"/></svg>
<svg style="position:absolute;left:3731px;top:44px;" width="34" height="34" viewBox="0 0 34 34"><circle cx="17" cy="17" r="16" fill="#E3A535"/><path d="M17 7 L26 16 L20 16 L20 25 L14 25 L14 16 L8 16 Z" fill="#FFFFFF"/></svg>
<svg style="position:absolute;left:3785px;top:46px;" width="30" height="30" viewBox="0 0 30 30"><defs><linearGradient id="lg1" x1="0" y1="0" x2="1" y2="1"><stop offset="0" stop-color="#F6F66A"/><stop offset="0.5" stop-color="#8ED98B"/><stop offset="1" stop-color="#3AB8D8"/></linearGradient><linearGradient id="lg2" x1="0" y1="0" x2="1" y2="1"><stop offset="0" stop-color="#3DBD8F"/><stop offset="1" stop-color="#2B4FB8"/></linearGradient></defs><path d="M3 1 Q-1 18 6 29 Q21 25 29 12 Q18 2 3 1 Z" fill="url(#lg1)"/><path d="M3 1 Q18 2 29 12 L18 13 Z" fill="#3FAFA0"/><path d="M29 12 Q21 25 6 29 Q16 18 18 13 Z" fill="url(#lg2)"/></svg>
<div style="position:absolute;left:-1.5px;top:182px;transform-origin:0 0;transform:rotate(-90deg);font-family:'Liberation Sans',sans-serif;font-size:23.5px;line-height:1;white-space:pre;color:#000;">Project</div>
<div style="position:absolute;left:-1.5px;top:354px;transform-origin:0 0;transform:rotate(-90deg);font-family:'Liberation Sans',sans-serif;font-size:23.7px;line-height:1;white-space:pre;color:#000;">Structure</div>
<div style="position:absolute;left:-1.5px;top:573px;transform-origin:0 0;transform:rotate(-90deg);font-family:'Liberation Sans',sans-serif;font-size:22.7px;line-height:1;white-space:pre;color:#000;">Pull Requests</div>
<div style="position:absolute;left:-1.5px;top:771px;transform-origin:0 0;transform:rotate(-90deg);font-family:'Liberation Sans',sans-serif;font-size:24.2px;line-height:1;white-space:pre;color:#000;">Json Parser</div>
<div style="position:absolute;left:-1.5px;top:909px;transform-origin:0 0;transform:rotate(-90deg);font-family:'Liberation Sans',sans-serif;font-size:24.8px;line-height:1;white-space:pre;color:#000;">Database</div>
<div style="position:absolute;left:-1.5px;top:1058px;transform-origin:0 0;transform:rotate(-90deg);font-family:'Liberation Sans',sans-serif;font-size:23.6px;line-height:1;white-space:pre;color:#000;">Codota</div>
<div style="position:absolute;left:-1.5px;top:1171px;transform-origin:0 0;transform:rotate(-90deg);font-family:'Liberation Sans',sans-serif;font-size:24.5px;line-height:1;white-space:pre;color:#000;">Ant</div>
<div style="position:absolute;left:-1.5px;top:1400px;transform-origin:0 0;transform:rotate(-90deg);font-family:'Liberation Sans',sans-serif;font-size:23.8px;line-height:1;white-space:pre;color:#000;">Big Data Tools</div>
<div style="position:absolute;left:-1.5px;top:1515px;transform-origin:0 0;transform:rotate(-90deg);font-family:'Liberation Sans',sans-serif;font-size:22.5px;line-height:1;white-space:pre;color:#000;">JOL</div>
<div style="position:absolute;left:-1.5px;top:2210px;transform-origin:0 0;transform:rotate(-90deg);font-family:'Liberation Sans',sans-serif;font-size:24.4px;line-height:1;white-space:pre;color:#000;">jclasslib</div>
<div style="position:absolute;left:-1.5px;top:2405px;transform-origin:0 0;transform:rotate(-90deg);font-family:'Liberation Sans',sans-serif;font-size:23.4px;line-height:1;white-space:pre;color:#000;">Bookmarks</div>
<svg style="position:absolute;left:0px;top:194px;" width="24" height="20" viewBox="0 0 24 20"><path d="M0 3 H8 L11 6 H22 V19 H0 Z" fill="#6E6E6E"/></svg>
<svg style="position:absolute;left:2px;top:366px;" width="22" height="20" viewBox="0 0 22 20"><rect x="0" y="11" width="8" height="8" fill="#6E6E6E"/><rect x="11" y="0" width="8" height="8" fill="#6E6E6E"/><rect x="11" y="11" width="8" height="8" fill="#6E6E6E"/></svg>
<svg style="position:absolute;left:0px;top:584px;" width="24" height="24" viewBox="0 0 24 24"><rect x="2.1" y="1" width="3.8" height="22" fill="#6E6E6E"/><path d="M6.5 8.8 L13.7 2 L13.7 15.7 Z" fill="#6E6E6E"/><path d="M13 7.2 H21.9 V20.7 H18 V11.1 H13 Z" fill="#6E6E6E"/></svg>
<svg style="position:absolute;left:0px;top:917px;" width="24" height="26" viewBox="0 0 24 26"><ellipse cx="12" cy="4" rx="11" ry="3.5" fill="#6E6E6E"/><path d="M1 7 q11 6 22 0 v4 q-11 6 -22 0Z" fill="#6E6E6E"/><path d="M1 14 q11 6 22 0 v4 q-11 6 -22 0Z" fill="#6E6E6E"/></svg>
<svg style="position:absolute;left:0px;top:1066px;" width="24" height="28" viewBox="0 0 24 28"><rect x="-4" y="0" width="27" height="27" rx="5" fill="#4CC38A"/><path d="M5 8 L10 13 L5 18" stroke="#FFF" stroke-width="2.2" fill="none"/><rect x="10" y="19" width="3" height="2" fill="#FFF"/></svg>
<svg style="position:absolute;left:0px;top:1179px;" width="25" height="28" viewBox="0 0 25 28"><ellipse cx="12" cy="9" rx="5" ry="5" fill="#6E6E6E"/><ellipse cx="12" cy="19" rx="6" ry="7" fill="#6E6E6E"/><path d="M1 5 L7 10 M23 5 L17 10 M0 14 H6 M24 14 H18 M1 24 L7 19 M23 24 L17 19" stroke="#6E6E6E" stroke-width="2"/></svg>
<svg style="position:absolute;left:0px;top:1409px;" width="24" height="28" viewBox="0 0 24 28"><path d="M2 2 H10 A11 12 0 0 1 10 26 H2 Z M7 7 V21 H10 A6 7 0 0 0 10 7 Z" fill="#6E6E6E"/></svg>
<svg style="position:absolute;left:0px;top:1519px;" width="26" height="30" viewBox="0 0 26 30"><rect x="0" y="0" width="22" height="29" fill="#3A6E2A"/><rect x="3" y="3" width="14" height="9" fill="#222"/><rect x="3" y="16" width="14" height="9" fill="#222"/><rect x="18" y="2" width="6" height="4" fill="#E9D44A"/><rect x="18" y="9" width="6" height="4" fill="#E9D44A"/><rect x="18" y="16" width="6" height="4" fill="#E9D44A"/><rect x="18" y="23" width="6" height="4" fill="#E9D44A"/></svg>
<svg style="position:absolute;left:2px;top:2217px;" width="22" height="26" viewBox="0 0 22 26"><rect x="0" y="0" width="20" height="25" fill="#DCEBF7"/><rect x="1" y="1" width="3" height="3" fill="#5C9BD5"/><rect x="5" y="1" width="3" height="3" fill="#5C9BD5"/><rect x="9" y="1" width="3" height="3" fill="#5C9BD5"/><rect x="13" y="1" width="3" height="3" fill="#5C9BD5"/><rect x="17" y="1" width="3" height="3" fill="#5C9BD5"/><rect x="1" y="6" width="3" height="3" fill="#5C9BD5"/><rect x="5" y="6" width="3" height="3" fill="#5C9BD5"/><rect x="9" y="6" width="3" height="3" fill="#5C9BD5"/><rect x="13" y="6" width="3" height="3" fill="#5C9BD5"/><rect x="17" y="6" width="3" height="3" fill="#5C9BD5"/><rect x="1" y="11" width="3" height="3" fill="#5C9BD5"/><rect x="5" y="11" width="3" height="3" fill="#5C9BD5"/><rect x="9" y="11" width="3" height="3" fill="#5C9BD5"/><rect x="13" y="11" width="3" height="3" fill="#5C9BD5"/><rect x="17" y="11" width="3" height="3" fill="#5C9BD5"/><rect x="1" y="16" width="3" height="3" fill="#5C9BD5"/><rect x="5" y="16" width="3" height="3" fill="#5C9BD5"/><rect x="9" y="16" width="3" height="3" fill="#5C9BD5"/><rect x="13" y="16" width="3" height="3" fill="#5C9BD5"/><rect x="17" y="16" width="3" height="3" fill="#5C9BD5"/><rect x="1" y="21" width="3" height="3" fill="#5C9BD5"/><rect x="5" y="21" width="3" height="3" fill="#5C9BD5"/><rect x="9" y="21" width="3" height="3" fill="#5C9BD5"/><rect x="13" y="21" width="3" height="3" fill="#5C9BD5"/><rect x="17" y="21" width="3" height="3" fill="#5C9BD5"/></svg>
<svg style="position:absolute;left:0px;top:2414px;" width="24" height="24" viewBox="0 0 24 24"><path d="M2 0 H20 V24 L11 17 L2 24 Z" fill="#6E6E6E"/></svg>
<div style="position:absolute;left:44px;top:1588.67px;font-family:'Liberation Sans',sans-serif;font-size:25.2px;line-height:1;white-space:pre;color:#000;transform-origin:0 0;transform:scaleX(1.057);">Debug:</div>
<svg style="position:absolute;left:153.7px;top:1591.2px;" width="20" height="20" viewBox="0 0 20 20"><path d="M2.5 2.5 L17.5 17.5 M17.5 2.5 L2.5 17.5" stroke="#B8B8B8" stroke-width="1.8"/></svg>
<svg style="position:absolute;left:186px;top:1583px;" width="34" height="34" viewBox="0 0 34 34"><rect x="5" y="2.5" width="23" height="19" fill="none" stroke="#A9B4BD" stroke-width="3"/><rect x="1.5" y="7" width="23" height="19" fill="#E3E6EB" stroke="#A9B4BD" stroke-width="3"/><rect x="5" y="10.5" width="16" height="12" fill="#8EC8E6"/><circle cx="28.5" cy="28.5" r="4.8" fill="#5FE34A" stroke="#777" stroke-width="1.2"/></svg>
<div style="position:absolute;left:225.5px;top:1588.67px;font-family:'Liberation Sans',sans-serif;font-size:25.2px;line-height:1;white-space:pre;color:#000;transform-origin:0 0;transform:scaleX(1.045);">Bootstrap</div>
<div style="position:absolute;left:142px;top:1620.5px;width:220px;height:5px;background:#4A7BC8;"></div>
<svg style="position:absolute;left:3738px;top:1585px;" width="28" height="28" viewBox="0 0 28 28"><polygon points="10.41,1.51 17.59,1.51 17.85,4.90 19.04,5.27 19.96,6.12 23.02,4.64 26.62,10.86 23.80,12.78 24.08,14.00 23.80,15.22 26.62,17.14 23.02,23.36 19.96,21.88 19.04,22.73 17.85,23.10 17.59,26.49 10.41,26.49 10.15,23.10 8.96,22.73 8.04,21.88 4.98,23.36 1.38,17.14 4.20,15.22 3.92,14.00 4.20,12.78 1.38,10.86 4.98,4.64 8.04,6.12 8.96,5.27 10.15,4.90" fill="#6E6E6E"/><circle cx="14" cy="14" r="4.6" fill="#E3E6EB"/></svg>
<div style="position:absolute;left:3792px;top:1597px;width:24px;height:4px;background:#6E6E6E;"></div>
<div style="position:absolute;left:116px;top:1643.52px;font-family:'Liberation Sans',sans-serif;font-size:23.6px;line-height:1;white-space:pre;color:#000;transform-origin:0 0;transform:scaleX(1.0187);">Variables | Memory | Overhead | Threads</div>
<div style="position:absolute;left:604px;top:1643.86px;font-family:'Liberation Sans',sans-serif;font-size:23.2px;line-height:1;white-space:pre;color:#000;">Console</div>
<div style="position:absolute;left:578px;top:1677px;width:138px;height:5px;background:#4A7BC8;"></div>
<div style="position:absolute;left:741px;top:1644.37px;font-family:'Liberation Sans',sans-serif;font-size:22.6px;line-height:1;white-space:pre;color:#000;">Frames</div>
<svg style="position:absolute;left:855px;top:1642px;" width="26" height="24" viewBox="0 0 26 24"><rect x="0" y="1" width="25" height="4" fill="#6E6E6E"/><rect x="0" y="10" width="25" height="4" fill="#4D97D6"/><rect x="0" y="19" width="25" height="4" fill="#6E6E6E"/></svg>
<div style="position:absolute;left:900px;top:1633px;width:2px;height:40px;background:#CFCFCF;"></div>
<svg style="position:absolute;left:919px;top:1638px;" width="28" height="30" viewBox="0 0 28 30"><path d="M2 14 L9 7 L19 15" fill="none" stroke="#4D97D6" stroke-width="3"/><path d="M24 8 V19 H13 Z" fill="#4D97D6"/><rect x="1" y="24" width="25" height="4" fill="#6E6E6E"/></svg>
<svg style="position:absolute;left:974px;top:1638px;" width="24" height="30" viewBox="0 0 24 30"><path d="M9 1 H15 V11 H21 L12 20 L3 11 H9 Z" fill="#4D97D6"/><rect x="0" y="24" width="24" height="4" fill="#6E6E6E"/></svg>
<svg style="position:absolute;left:1026px;top:1638px;" width="24" height="30" viewBox="0 0 24 30"><path d="M9 1 H15 V11 H21 L12 20 L3 11 H9 Z" fill="#D05C60"/><rect x="0" y="24" width="24" height="4" fill="#6E6E6E"/></svg>
<svg style="position:absolute;left:1078px;top:1638px;" width="24" height="30" viewBox="0 0 24 30"><path d="M12 1 L21 10 H15 V20 H9 V10 H3 Z" fill="#4D97D6"/><rect x="0" y="24" width="24" height="4" fill="#6E6E6E"/></svg>
<svg style="position:absolute;left:1127px;top:1636px;" width="30" height="30" viewBox="0 0 30 30"><path d="M2 2 L12 12 M12 2 L2 12" stroke="#D05C60" stroke-width="3.2"/><path d="M11 18 V27 H25 V13 H16" fill="none" stroke="#6E6E6E" stroke-width="3.4"/></svg>
<svg style="position:absolute;left:1179px;top:1638px;" width="30" height="30" viewBox="0 0 30 30"><path d="M2 2 L10 10" stroke="#C4C4C4" stroke-width="3"/><path d="M14 4 V15 H3 Z" fill="#C4C4C4"/><path d="M17 13 H26 M21.5 13 V28 M17 28 H26" stroke="#C4C4C4" stroke-width="1.8"/></svg>
<div style="position:absolute;left:1226px;top:1633px;width:2px;height:40px;background:#CFCFCF;"></div>
<svg style="position:absolute;left:1247px;top:1640px;" width="26" height="26" viewBox="0 0 26 26"><rect x="1.5" y="1.5" width="22" height="22" fill="none" stroke="#6E6E6E" stroke-width="3"/><rect x="4" y="4" width="17" height="4" fill="#6E6E6E"/><rect x="4" y="10" width="5" height="5" fill="#6E6E6E"/><rect x="10" y="10" width="5" height="5" fill="#6E6E6E"/><rect x="16" y="10" width="5" height="5" fill="#6E6E6E"/><rect x="4" y="16" width="5" height="5" fill="#6E6E6E"/><rect x="10" y="16" width="5" height="5" fill="#6E6E6E"/><rect x="16" y="16" width="5" height="5" fill="#6E6E6E"/></svg>
<svg style="position:absolute;left:1299px;top:1640px;" width="26" height="26" viewBox="0 0 26 26"><rect x="0" y="2" width="9" height="4" fill="#C4C4C4"/><rect x="14" y="2" width="11" height="4" fill="#C4C4C4"/><rect x="0" y="10" width="7" height="4" fill="#C4C4C4"/><rect x="13" y="10" width="12" height="4" fill="#C4C4C4"/><rect x="0" y="18" width="5" height="4" fill="#C4C4C4"/><rect x="14" y="18" width="11" height="4" fill="#C4C4C4"/><path d="M5 24 L13 1" stroke="#C4C4C4" stroke-width="2"/></svg>
<svg style="position:absolute;left:3793px;top:1642px;" width="38" height="34" viewBox="0 0 38 34"><rect x="1" y="1" width="14" height="10" fill="#6E6E6E"/><rect x="17" y="1" width="8" height="10" fill="#6E6E6E"/><rect x="1" y="13" width="24" height="8" fill="#6E6E6E"/><path d="M23 25 L35 25 L29 31 Z" fill="#222"/></svg>
<svg style="position:absolute;left:46px;top:1640px;" width="32" height="32" viewBox="0 0 32 32"><path d="M17.5 8 A10 10 0 1 0 14 27.5" fill="none" stroke="#6AA56F" stroke-width="3.6"/><path d="M16.5 1 L29 8.5 L16.5 15 Z" fill="#6AA56F"/><rect x="15.5" y="18.5" width="11" height="11" fill="#F2F2F2"/><rect x="16.5" y="19.5" width="10" height="10" fill="#6E6E6E"/></svg>
<svg style="position:absolute;left:46px;top:1692px;" width="30" height="30" viewBox="0 0 30 30"><path d="M3 27 L15 15" stroke="#6E6E6E" stroke-width="5"/><circle cx="20" cy="10" r="8.5" fill="#6E6E6E"/><path d="M20 10 L30 0" stroke="#F2F2F2" stroke-width="6"/><circle cx="26" cy="4" r="3" fill="#F2F2F2"/></svg>
<div style="position:absolute;left:40px;top:1739px;width:40px;height:2px;background:#CFCFCF;"></div>
<svg style="position:absolute;left:49px;top:1760px;" width="26" height="24" viewBox="0 0 26 24"><rect x="1" y="1" width="6" height="22" fill="#6AA56F"/><path d="M11 1 L24 12 L11 23 Z" fill="#6AA56F"/></svg>
<div style="position:absolute;left:52px;top:1813px;width:6px;height:22px;background:#BDBDBD;"></div>
<div style="position:absolute;left:62px;top:1813px;width:6px;height:22px;background:#BDBDBD;"></div>
<div style="position:absolute;left:50px;top:1867px;width:20px;height:20px;background:#D05C60;"></div>
<div style="position:absolute;left:40px;top:1909px;width:40px;height:2px;background:#CFCFCF;"></div>
<svg style="position:absolute;left:46px;top:1927px;" width="30" height="30" viewBox="0 0 30 30"><circle cx="19.5" cy="9.5" r="9" fill="#D05C60"/><circle cx="10.5" cy="18" r="10.5" fill="#F2F2F2"/><circle cx="10.5" cy="18" r="8.5" fill="#D05C60"/></svg>
<svg style="position:absolute;left:46px;top:1982px;" width="28" height="28" viewBox="0 0 28 28"><circle cx="14" cy="13" r="10" fill="#D05C60"/><path d="M2 24 L24 2" stroke="#F2F2F2" stroke-width="5"/><path d="M2 24 L24 2" stroke="#6E6E6E" stroke-width="2.4"/></svg>
<div style="position:absolute;left:40px;top:2027px;width:40px;height:2px;background:#CFCFCF;"></div>
<svg style="position:absolute;left:46px;top:2048px;" width="28" height="26" viewBox="0 0 28 26"><path d="M0 5 H7 L9 1 H19 L21 5 H28 V25 H0 Z" fill="#6E6E6E"/><circle cx="14" cy="15" r="6" fill="#F2F2F2"/><circle cx="14" cy="15" r="3.6" fill="#6E6E6E"/></svg>
<div style="position:absolute;left:40px;top:2093px;width:40px;height:2px;background:#CFCFCF;"></div>
<svg style="position:absolute;left:46px;top:2113px;" width="34" height="34" viewBox="0 0 34 34"><polygon points="9.41,1.51 16.59,1.51 16.85,4.90 18.04,5.27 18.96,6.12 22.02,4.64 25.62,10.86 22.80,12.78 23.08,14.00 22.80,15.22 25.62,17.14 22.02,23.36 18.96,21.88 18.04,22.73 16.85,23.10 16.59,26.49 9.41,26.49 9.15,23.10 7.96,22.73 7.04,21.88 3.98,23.36 0.38,17.14 3.20,15.22 2.92,14.00 3.20,12.78 0.38,10.86 3.98,4.64 7.04,6.12 7.96,5.27 9.15,4.90" fill="#6E6E6E"/><circle cx="13" cy="14" r="4.6" fill="#F2F2F2"/></svg>
<svg style="position:absolute;left:66px;top:2138px;" width="14" height="8" viewBox="0 0 14 8"><path d="M0 0 H13 L6.5 7 Z" fill="#222"/></svg>
<div style="position:absolute;left:40px;top:2159px;width:40px;height:2px;background:#CFCFCF;"></div>
<svg style="position:absolute;left:45px;top:2178px;" width="30" height="30" viewBox="0 0 30 30"><path d="M15 0 L29 12 L22 13 L17 21 L16 26 L3 13 L8 12 L16 7 Z" fill="#6E6E6E"/><path d="M1 29 L10 19" stroke="#6E6E6E" stroke-width="2.4"/></svg>
<svg style="position:absolute;left:104px;top:1700px;" width="28" height="28" viewBox="0 0 28 28"><path d="M12 19 L26 5" stroke="#6E6E6E" stroke-width="4.4"/><path d="M7 20 L13 14 L17 18 L14 20 Z" fill="#C0574E"/><rect x="0" y="21" width="26" height="5" fill="#C0574E"/></svg>
<svg style="position:absolute;left:108px;top:1753px;" width="20" height="25" viewBox="0 0 20 25"><path d="M2 10 L10 2 L18 10" fill="none" stroke="#BF5A4E" stroke-width="3.2"/><path d="M10 3 V24" stroke="#BF5A4E" stroke-width="3.6"/></svg>
<svg style="position:absolute;left:108px;top:1805px;" width="20" height="25" viewBox="0 0 20 25"><path d="M2 14 L10 22 L18 14" fill="none" stroke="#BF5A4E" stroke-width="3.2"/><path d="M10 0 V21" stroke="#BF5A4E" stroke-width="3.6"/></svg>
<svg style="position:absolute;left:108px;top:1857px;" width="20" height="25" viewBox="0 0 20 25"><path d="M2 10 L10 2 L18 10" fill="none" stroke="#6E6E6E" stroke-width="3.2"/><path d="M10 3 V24" stroke="#6E6E6E" stroke-width="3.6"/></svg>
<svg style="position:absolute;left:108px;top:1909px;" width="20" height="25" viewBox="0 0 20 25"><path d="M2 14 L10 22 L18 14" fill="none" stroke="#6E6E6E" stroke-width="3.2"/><path d="M10 0 V21" stroke="#6E6E6E" stroke-width="3.6"/></svg>
<svg style="position:absolute;left:105px;top:1960px;" width="28" height="30" viewBox="0 0 28 30"><rect x="1" y="1" width="24" height="4" fill="#6E6E6E"/><rect x="1" y="21" width="6" height="4" fill="#6E6E6E"/><path d="M1 11 H19 A6 6 0 0 1 19 23 H14" fill="none" stroke="#6E6E6E" stroke-width="3.4"/><path d="M9 23 L15 17 L15 29 Z" fill="#6E6E6E"/></svg>
<div style="position:absolute;left:96.5px;top:2003px;width:43px;height:43.5px;background:#D5D5D5;border-radius:6px;"></div>
<svg style="position:absolute;left:105px;top:2010px;" width="28" height="28" viewBox="0 0 28 28"><rect x="1" y="4" width="9" height="4" fill="#6E6E6E"/><rect x="1" y="12" width="9" height="4" fill="#6E6E6E"/><rect x="1" y="20" width="25" height="4" fill="#6E6E6E"/><path d="M18 0 V14" stroke="#6E6E6E" stroke-width="3.4"/><path d="M12 11 L18 17 L24 11 Z" fill="#6E6E6E"/></svg>
<svg style="position:absolute;left:104px;top:2064px;" width="28" height="28" viewBox="0 0 28 28"><rect x="6" y="1" width="16" height="5" fill="#6E6E6E"/><path d="M0 9 H28 V20 H23 V14 H5 V20 H0 Z" fill="#6E6E6E"/><rect x="7" y="16" width="14" height="10" fill="none" stroke="#6E6E6E" stroke-width="2.2"/></svg>
<svg style="position:absolute;left:107px;top:2114px;" width="22" height="28" viewBox="0 0 22 28"><rect x="0" y="2" width="21" height="4" fill="#6E6E6E"/><rect x="7" y="0" width="7" height="3" fill="#6E6E6E"/><path d="M2 8 H19 V24 Q19 26 17 26 H4 Q2 26 2 24 Z" fill="#6E6E6E"/></svg>
<svg style="position:absolute;left:1216px;top:661px;" width="22" height="22" viewBox="0 0 22 22"><circle cx="11" cy="11" r="9" fill="#93C47D"/><path d="M8 6.5h6M8 15.5h6M11 6.5v9" stroke="#3A3A3A" stroke-width="1.8"/></svg>
<svg style="position:absolute;left:1233px;top:658px;" width="12" height="29" viewBox="0 0 12 29"><path d="M6 6 V28" stroke="#D35D5D" stroke-width="2.4"/><path d="M0.5 8 L6 1 L11.5 8 Z" fill="#D35D5D"/></svg>
<div style="position:absolute;left:1253px;top:658.14px;font-family:'Liberation Sans',sans-serif;font-size:27px;line-height:1;white-space:pre;color:#6E6E6E;">@</div>
<svg style="position:absolute;left:1250px;top:748px;" width="34" height="32" viewBox="0 0 34 32"><circle cx="15" cy="16.5" r="12" fill="#D05C60"/><path d="M9 8 L14.5 13 L25 2" fill="none" stroke="#FFFFFF" stroke-width="6"/><path d="M9 8 L14.5 13 L25 2" fill="none" stroke="#6E6E6E" stroke-width="3"/></svg>
<svg style="position:absolute;left:1300px;top:250.98px;" width="20" height="25" viewBox="0 0 20 25"><path d="M1.8 1 H18 V14.8 L9.9 22.7 L1.8 14.8 Z" fill="#FFFFFF" stroke="#CACACA" stroke-width="1.8"/><path d="M5.5 8.6 H14.3" stroke="#CACACA" stroke-width="1.8"/></svg>
<svg style="position:absolute;left:1300px;top:477.47999999999996px;" width="20" height="25" viewBox="0 0 20 25"><path d="M1.8 22.7 H18 V8.2 L9.9 1 L1.8 8.2 Z" fill="#FFFFFF" stroke="#CACACA" stroke-width="1.8"/><path d="M5.5 14.6 H14.3" stroke="#CACACA" stroke-width="1.8"/></svg>
<svg style="position:absolute;left:1300px;top:664.4399999999999px;" width="20" height="25" viewBox="0 0 20 25"><path d="M1.8 1 H18 V14.8 L9.9 22.7 L1.8 14.8 Z" fill="#FFFFFF" stroke="#CACACA" stroke-width="1.8"/><path d="M5.5 8.6 H14.3" stroke="#CACACA" stroke-width="1.8"/></svg>
<svg style="position:absolute;left:1300px;top:890.9399999999999px;" width="20" height="25" viewBox="0 0 20 25"><path d="M1.8 22.7 H18 V8.2 L9.9 1 L1.8 8.2 Z" fill="#FFFFFF" stroke="#CACACA" stroke-width="1.8"/><path d="M5.5 14.6 H14.3" stroke="#CACACA" stroke-width="1.8"/></svg>
<svg style="position:absolute;left:3790px;top:159px;" width="28" height="22" viewBox="0 0 28 22"><path d="M2 10 L9 17 L25 2" fill="none" stroke="#62A26A" stroke-width="4.2"/></svg>
<div style="position:absolute;left:3802px;top:795px;width:28px;height:4px;background:#F4C9C4;"></div>
<div style="position:absolute;left:3802px;top:841px;width:28px;height:4px;background:#2F54A3;"></div>
<div style="position:absolute;left:3747.5px;top:2417.86px;font-family:'Liberation Sans',sans-serif;font-size:10.8px;line-height:1;white-space:pre;color:#8C8C8C;">CSDN @帝燚</div>
<div style="position:absolute;left:3812px;top:2201px;width:13.5px;height:237px;background:#808080;border-radius:6.5px 6.5px 0 0;"></div>
</body></html>
